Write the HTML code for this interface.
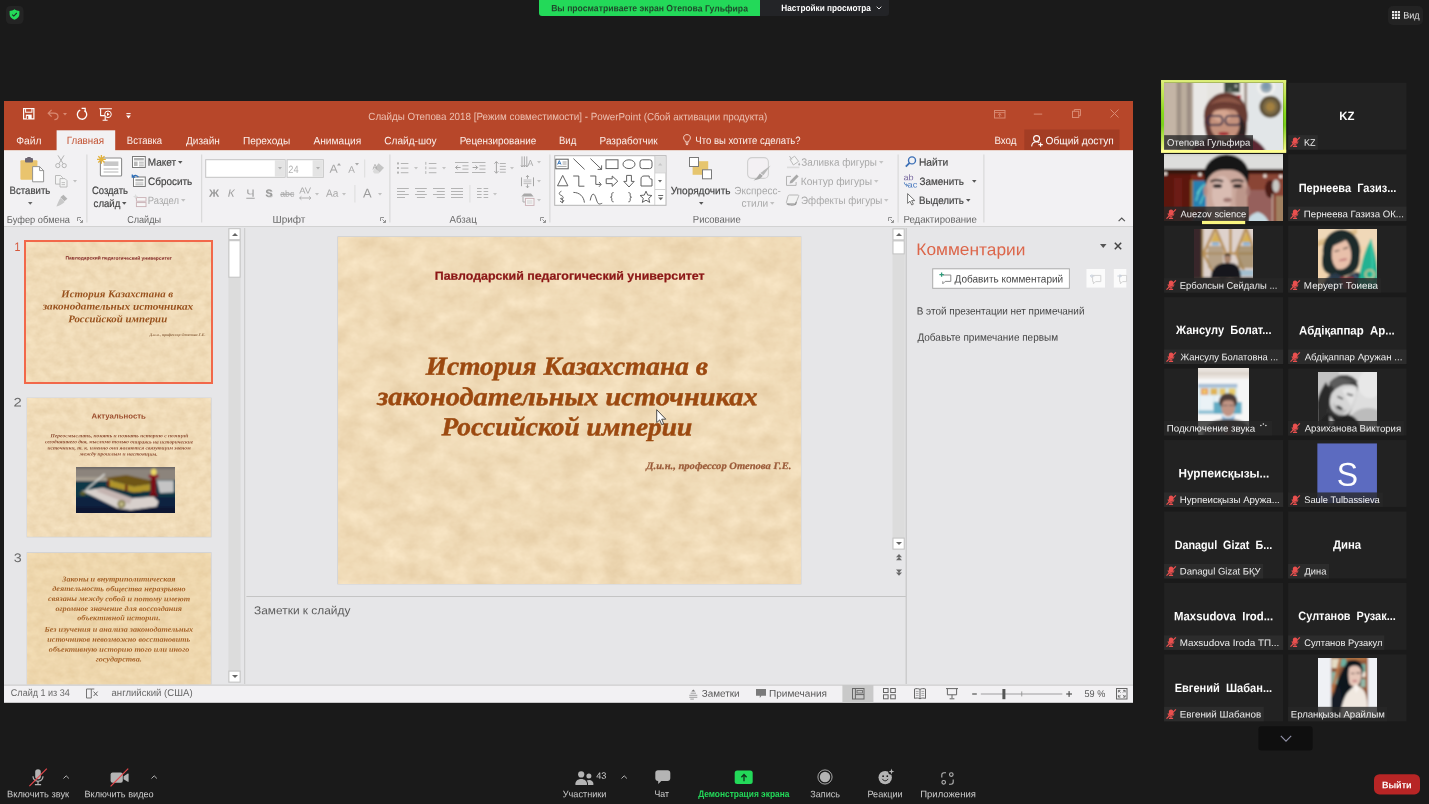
<!DOCTYPE html>
<html lang="ru"><head><meta charset="utf-8"><title>Zoom</title>
<style>
html,body{margin:0;padding:0;background:#1a1a1a;}
body{width:1429px;height:804px;overflow:hidden;font-family:"Liberation Sans",sans-serif;}
#root{position:relative;width:1429px;height:804px;overflow:hidden;background:#1a1a1a;}
#root div,#root svg,#root span.t{position:absolute;box-sizing:border-box;}
#root svg{overflow:visible;}
span.t{white-space:pre;transform-origin:0 50%;display:block;opacity:0.99;}
span.serif{font-family:"Liberation Serif",serif;}
span.dsans{font-family:"DejaVu Sans",sans-serif;}
span.dserif{font-family:"DejaVu Serif",serif;}

</style></head>
<body>
<svg width="0" height="0" style="position:absolute">
<defs>
<filter id="b1" x="-10%" y="-10%" width="120%" height="120%"><feGaussianBlur stdDeviation="1.2"/></filter>
<filter id="b2" x="-10%" y="-10%" width="120%" height="120%"><feGaussianBlur stdDeviation="1.4"/></filter>
<filter id="b05" x="-10%" y="-10%" width="120%" height="120%"><feGaussianBlur stdDeviation="0.8"/></filter>
<filter id="parch" x="0" y="0" width="100%" height="100%" color-interpolation-filters="sRGB">
<feTurbulence type="fractalNoise" baseFrequency="0.045 0.055" numOctaves="4" seed="11" result="n"/>
<feColorMatrix in="n" type="matrix" values="0.10 0 0 0 0.893  0.13 0 0 0 0.795  0.165 0 0 0 0.638  0 0 0 0 1"/>
</filter>
<filter id="parchs" x="0" y="0" width="100%" height="100%" color-interpolation-filters="sRGB">
<feTurbulence type="fractalNoise" baseFrequency="0.10 0.12" numOctaves="3" seed="5" result="n"/>
<feColorMatrix in="n" type="matrix" values="0.10 0 0 0 0.893  0.13 0 0 0 0.795  0.165 0 0 0 0.638  0 0 0 0 1"/>
</filter>
<linearGradient id="brown" x1="0" y1="0" x2="0" y2="1"><stop offset="0" stop-color="#8a3a0c"/><stop offset="0.5" stop-color="#a54e12"/><stop offset="1" stop-color="#8f4310"/></linearGradient>
</defs></svg>
<div id="root">
<svg style="left:4px;top:101px" width="1129" height="50"><rect x="0" y="0" width="1129" height="50" fill="#b7472a"/></svg>
<svg style="left:22.7px;top:108px;" width="11.5" height="11.5" viewBox="0 0 11.5 11.5"><path d="M0.6 0.6h10.3v10.3H0.6z" fill="none" stroke="#ffffff" stroke-width="1.2"/><rect x="2.6" y="0.6" width="6.3" height="3.6" fill="#b7472a" stroke="#ffffff" stroke-width="1"/><rect x="2.8" y="6.6" width="5.9" height="4.3" fill="#ffffff"/><rect x="3.8" y="8" width="1.4" height="2.9" fill="#b7472a"/></svg>
<svg style="left:46.5px;top:108.5px;" width="12" height="11" viewBox="0 0 12 11"><path d="M4.6 0.8L1.2 4.2l3.4 3.4M1.4 4.2h5.4c2.6 0 4.2 1.4 4.2 3.4s-1.6 3-3.6 3" stroke="#d98a72" stroke-width="1.2" fill="none"/></svg>
<svg style="left:63px;top:113.3px;" width="4" height="2.4" viewBox="0 0 5 3"><path d="M0 0h5L2.5 3z" fill="#d98a72"/></svg>
<svg style="left:75.5px;top:107.8px;" width="11.5" height="12" viewBox="0 0 11.5 12"><path d="M4.2 2.2A4.7 4.7 0 1 0 8.6 2.6" stroke="#ffffff" stroke-width="1.3" fill="none"/><path d="M5.6 0.4h3.6v3.6" stroke="#ffffff" stroke-width="1.2" fill="none"/></svg>
<svg style="left:99px;top:107.5px;" width="13.5" height="13" viewBox="0 0 13.5 13"><path d="M0.3 0.8h12.6M1.6 1v6.6h4.4M6.2 7.8v4.2M3.6 12.2h5" stroke="#ffffff" stroke-width="1.1" fill="none"/><circle cx="9" cy="6.3" r="3.3" fill="#b7472a" stroke="#ffffff" stroke-width="1"/><path d="M8 4.6l2.6 1.7l-2.6 1.7z" fill="#ffffff"/></svg>
<svg style="left:126.3px;top:112.6px;" width="5" height="6" viewBox="0 0 5 6"><path d="M0.4 0.6h4.2" stroke="#ffffff" stroke-width="1"/><path d="M0.2 2.6h4.6L2.5 5.4z" fill="#ffffff"/></svg>
<span class="t" style="transform:translate(0.30px,0.00px) rotate(0.03deg) scaleX(0.9450);left:368px;top:110px;font-size:10.4px;line-height:14px;color:#edc2b3;">Слайды Отепова 2018 [Режим совместимости] - PowerPoint (Сбой активации продукта)</span>
<svg style="left:994px;top:109.5px;" width="11.5" height="8.5" viewBox="0 0 11.5 8.5"><rect x="0.5" y="0.5" width="10.5" height="7.5" fill="none" stroke="#d98a72" stroke-width="1"/><path d="M0.5 2.6h10.5M5.7 7V3.6M4 5.2l1.7-1.7l1.7 1.7" stroke="#d98a72" stroke-width="0.9" fill="none"/></svg>
<svg style="left:1033px;top:113px" width="10" height="2"><rect x="0.8" y="0.6" width="8.4" height="1" fill="#d98a72"/></svg>
<svg style="left:1071.5px;top:109.3px;" width="9" height="9" viewBox="0 0 9 9"><rect x="0.5" y="2.3" width="6.2" height="6.2" fill="none" stroke="#d98a72" stroke-width="1"/><path d="M2.3 2.3V0.5h6.2v6.2H6.7" stroke="#d98a72" stroke-width="1" fill="none"/></svg>
<svg style="left:1109.8px;top:109px;" width="9" height="9" viewBox="0 0 9 9"><path d="M0.5 0.5l8 8M8.5 0.5l-8 8" stroke="#d98a72" stroke-width="1" fill="none"/></svg>
<svg style="left:56px;top:130px" width="60" height="21"><rect x="0.6" y="0.3" width="58.6" height="20.7" fill="#f2f1f3"/></svg>
<span class="t" style="transform:translate(0.21px,0.20px) rotate(0.03deg) scaleX(0.9714);left:16px;top:133px;font-size:10.6px;line-height:14px;color:#fdf3ef;">Файл</span>
<span class="t" style="transform:translate(0.82px,0.20px) rotate(0.03deg) scaleX(0.8959);left:126px;top:133px;font-size:10.6px;line-height:14px;color:#fdf3ef;">Вставка</span>
<span class="t" style="transform:translate(0.03px,0.20px) rotate(0.03deg) scaleX(0.9511);left:186px;top:133px;font-size:10.6px;line-height:14px;color:#fdf3ef;">Дизайн</span>
<span class="t" style="transform:translate(0.88px,0.20px) rotate(0.03deg) scaleX(0.9520);left:242px;top:133px;font-size:10.6px;line-height:14px;color:#fdf3ef;">Переходы</span>
<span class="t" style="transform:translate(0.38px,0.20px) rotate(0.03deg) scaleX(0.9635);left:313px;top:133px;font-size:10.6px;line-height:14px;color:#fdf3ef;">Анимация</span>
<span class="t" style="transform:translate(0.29px,0.20px) rotate(0.03deg) scaleX(0.9509);left:384px;top:133px;font-size:10.6px;line-height:14px;color:#fdf3ef;">Слайд-шоу</span>
<span class="t" style="transform:translate(0.69px,0.20px) rotate(0.03deg) scaleX(0.9369);left:459px;top:133px;font-size:10.6px;line-height:14px;color:#fdf3ef;">Рецензирование</span>
<span class="t" style="transform:translate(0.02px,0.20px) rotate(0.03deg) scaleX(0.8994);left:559px;top:133px;font-size:10.6px;line-height:14px;color:#fdf3ef;">Вид</span>
<span class="t" style="transform:translate(0.58px,0.20px) rotate(0.03deg) scaleX(0.9399);left:599px;top:133px;font-size:10.6px;line-height:14px;color:#fdf3ef;">Разработчик</span>
<span class="t" style="transform:translate(0.36px,0.20px) rotate(0.03deg) scaleX(0.8981);left:695px;top:133px;font-size:10.6px;line-height:14px;color:#fdf3ef;">Что вы хотите сделать?</span>
<span class="t" style="transform:translate(0.40px,0.20px) rotate(0.03deg) scaleX(0.9250);left:994px;top:133px;font-size:10.6px;line-height:14px;color:#fdf3ef;">Вход</span>
<span class="t" style="transform:translate(0.70px,0.20px) rotate(0.03deg) scaleX(0.9244);left:66px;top:133px;font-size:10.6px;line-height:14px;color:#c2502f;">Главная</span>
<svg style="left:682.5px;top:134px;" width="8" height="11.5" viewBox="0 0 8 11.5"><path d="M4 0.6c2 0 3.4 1.4 3.4 3.2c0 1.2-0.6 2-1.3 2.7c-0.4 0.4-0.5 0.9-0.5 1.5h-3.2c0-0.6-0.1-1.1-0.5-1.5c-0.7-0.7-1.3-1.5-1.3-2.7c0-1.8 1.4-3.2 3.4-3.2z" fill="none" stroke="#fbe3d8" stroke-width="0.9"/><path d="M2.6 9.2h2.8M2.9 10.6h2.2" stroke="#fbe3d8" stroke-width="0.9"/></svg>
<svg style="left:1024px;top:129px" width="96" height="22"><rect x="0.3" y="0.5" width="95.2" height="21.5" fill="#a33d24"/></svg>
<svg style="left:1030.5px;top:134.5px;" width="12.5" height="12" viewBox="0 0 12.5 12"><circle cx="5.6" cy="3.6" r="3" fill="none" stroke="#ffffff" stroke-width="1.1"/><path d="M0.6 11.4c0.4-3 2.4-4.6 5-4.6c1 0 1.9 0.2 2.6 0.7" stroke="#ffffff" stroke-width="1.1" fill="none"/><path d="M9.6 7.4v4.4M7.4 9.6h4.4" stroke="#ffffff" stroke-width="1.1"/></svg>
<span class="t" style="transform:translate(0.62px,0.20px) rotate(0.03deg) scaleX(0.9563);left:1045px;top:133px;font-size:10.6px;line-height:14px;color:#ffffff;">Общий доступ</span>
<svg style="left:4px;top:150px" width="1129" height="77"><rect x="0" y="0" width="1129" height="76.5" fill="#f2f1f3"/></svg>
<svg style="left:4px;top:150px" width="53" height="1"><rect x="0" y="0" width="52.6" height="1" fill="#e9d3ca"/></svg>
<svg style="left:115px;top:150px" width="1018" height="1"><rect x="0.2" y="0" width="1017.8" height="1" fill="#e9d3ca"/></svg>
<svg style="left:4px;top:226px" width="1129" height="1"><rect x="0" y="0" width="1129" height="1" fill="#d2d2d2"/></svg>
<svg style="left:19.8px;top:156.5px;" width="24.5" height="25.5" viewBox="0 0 24.5 25.5"><rect x="0.4" y="3.2" width="17" height="19.6" rx="1" fill="#e9c46e"/><rect x="5" y="1" width="8" height="4.4" rx="1" fill="#6d6672"/><rect x="7" y="0" width="4" height="2.6" rx="1.2" fill="#6d6672"/><path d="M12.6 9.6h7l4 4v11.2h-11z" fill="#fff" stroke="#8a8a8a" stroke-width="0.9"/><path d="M19.6 9.6v4h4" fill="none" stroke="#8a8a8a" stroke-width="0.9"/></svg>
<span class="t" style="transform:translate(0.61px,0.20px) rotate(0.03deg) scaleX(0.9059);left:9px;top:183px;font-size:10.6px;line-height:14px;color:#444444;-webkit-text-stroke:0.2px #444;">Вставить</span>
<svg style="left:27.95px;top:202.05px;" width="4.5" height="2.7" viewBox="0 0 5 3"><path d="M0 0h5L2.5 3z" fill="#666"/></svg>
<svg style="left:55.4px;top:155px;" width="12" height="13.5" viewBox="0 0 12 13.5"><path d="M3 0.4l5.2 8.4M9 0.4L3.8 8.8" stroke="#b4b4b4" stroke-width="1" fill="none"/><circle cx="2.8" cy="10.6" r="2.1" fill="none" stroke="#b4b4b4" stroke-width="1"/><circle cx="9.2" cy="10.6" r="2.1" fill="none" stroke="#b4b4b4" stroke-width="1"/></svg>
<svg style="left:55.4px;top:175px;" width="12.5" height="12.5" viewBox="0 0 12.5 12.5"><path d="M0.5 0.5h5l2 2v6.6h-7z" fill="#f4f4f4" stroke="#b4b4b4" stroke-width="0.9"/><path d="M5 3.6h5l2 2v6.4h-7z" fill="#f4f4f4" stroke="#b4b4b4" stroke-width="0.9"/><path d="M6.6 7.6h3.4M6.6 9.6h3.4" stroke="#b4b4b4" stroke-width="0.8"/></svg>
<svg style="left:73px;top:179.8px;" width="4" height="2.4" viewBox="0 0 5 3"><path d="M0 0h5L2.5 3z" fill="#c0c0c0"/></svg>
<svg style="left:55.6px;top:193.5px;" width="12.5" height="13" viewBox="0 0 12.5 13"><path d="M7.4 0.8l4 4l-3 2.4l-4-4z" fill="#b4b4b4"/><path d="M4.6 4l4 4l-1.4 1.2c-2 1.6-4.4 2.6-6.8 3.2c1-2.2 1.8-4.6 3-6.800z" fill="#c8c8c8"/></svg>
<span class="t" style="transform:translate(0.84px,0.80px) rotate(0.03deg) scaleX(0.9294);left:6px;top:212px;font-size:10px;line-height:13px;color:#666666;">Буфер обмена</span>
<svg style="left:77px;top:216.5px;" width="6" height="6" viewBox="0 0 6 6"><path d="M0.5 4V0.5H4" stroke="#888" stroke-width="0.9" fill="none"/><path d="M2.4 2.4L5.3 5.3M5.5 3v2.5H3" stroke="#888" stroke-width="0.9" fill="none"/></svg>
<svg style="left:86px;top:154px" width="2" height="69"><rect x="0.4" y="0.5" width="1" height="68" fill="#d4d4d4"/></svg>
<svg style="left:96.8px;top:155.3px;" width="25.5" height="22" viewBox="0 0 25.5 22"><rect x="3.4" y="3" width="21.2" height="18" rx="1" fill="#fff" stroke="#8c8c8c" stroke-width="1.1"/><rect x="6.6" y="6.4" width="14.8" height="4.6" fill="#c8c8c8"/><path d="M6.600 14h14.8M6.600 17h14.8" stroke="#b4b4b4" stroke-width="1"/><g stroke="#e3b23c" stroke-width="1.3"><path d="M4.400 0v8.800M0 4.400h8.800M1.300 1.300l6.200 6.200M7.500 1.300l-6.200 6.200"/></g></svg>
<span class="t" style="transform:translate(0.92px,0.20px) rotate(0.03deg) scaleX(0.8958);left:91px;top:183px;font-size:10.6px;line-height:14px;color:#444444;-webkit-text-stroke:0.2px #444;">Создать</span>
<span class="t" style="transform:translate(0.60px,0.80px) rotate(0.03deg) scaleX(0.9079);left:93px;top:195px;font-size:10.6px;line-height:14px;color:#444444;-webkit-text-stroke:0.2px #444;">слайд</span>
<svg style="left:122.05px;top:202.25px;" width="4.5" height="2.7" viewBox="0 0 5 3"><path d="M0 0h5L2.5 3z" fill="#555"/></svg>
<svg style="left:132.3px;top:155.8px;" width="13.8" height="12" viewBox="0 0 13.8 12"><rect x="0.5" y="0.5" width="12.8" height="11" fill="#fff" stroke="#7a7a7a" stroke-width="1"/><rect x="2" y="2" width="9.8" height="2.4" fill="#b0b0b0"/><rect x="2" y="5.600" width="3.6" height="4.400" fill="#b8b8b8"/><path d="M7 6.200h4.800M7 8h4.800M7 9.800h4.800" stroke="#9a9a9a" stroke-width="0.8"/></svg>
<span class="t" style="transform:translate(0.78px,0.70px) rotate(0.03deg) scaleX(0.9470);left:147px;top:154px;font-size:10.6px;line-height:14px;color:#444444;-webkit-text-stroke:0.2px #444;">Макет</span>
<svg style="left:178.35px;top:160.65px;" width="4.5" height="2.7" viewBox="0 0 5 3"><path d="M0 0h5L2.5 3z" fill="#555"/></svg>
<svg style="left:132.3px;top:174.2px;" width="13.8" height="13" viewBox="0 0 13.8 13"><rect x="1.500" y="3" width="11.8" height="9.500" fill="#fff" stroke="#7a7a7a" stroke-width="1"/><rect x="3.400" y="5" width="8" height="2.200" fill="#b0b0b0"/><path d="M3.400 9h8M3.400 10.800h8" stroke="#9a9a9a" stroke-width="0.8"/><path d="M6.400 3.200c-1.400-2-4-2.600-5.800-0.400M0.300 0.400v2.800h2.800" stroke="#2f6fb8" stroke-width="1.3" fill="none"/></svg>
<span class="t" style="transform:translate(0.10px,0.90px) rotate(0.03deg) scaleX(0.9366);left:148px;top:173px;font-size:10.6px;line-height:14px;color:#444444;-webkit-text-stroke:0.2px #444;">Сбросить</span>
<svg style="left:133px;top:193.5px;" width="13.5" height="13" viewBox="0 0 13.5 13"><rect x="3.400" y="3.600" width="9.600" height="3.600" fill="#f6f6f6" stroke="#c9b0b4" stroke-width="0.9"/><rect x="3.400" y="8.600" width="9.600" height="4" fill="#f6f6f6" stroke="#c9b0b4" stroke-width="0.9"/><path d="M2.600 0l0.800 1.800l1.800 0.800l-1.800 0.800l-0.800 1.800l-0.800-1.800l-1.800-0.800l1.800-0.800z" fill="#dcdcdc"/></svg>
<span class="t" style="transform:translate(0.82px,0.00px) rotate(0.03deg) scaleX(0.8918);left:147px;top:193px;font-size:10.6px;line-height:14px;color:#a8a8a8;">Раздел</span>
<svg style="left:180.75px;top:199.05px;" width="4.5" height="2.7" viewBox="0 0 5 3"><path d="M0 0h5L2.5 3z" fill="#c0c0c0"/></svg>
<span class="t" style="transform:translate(0.14px,0.80px) rotate(0.03deg) scaleX(0.9102);left:127px;top:212px;font-size:10px;line-height:13px;color:#666666;">Слайды</span>
<svg style="left:201px;top:154px" width="2" height="69"><rect x="0.2" y="0.5" width="1" height="68" fill="#d4d4d4"/></svg>
<svg style="left:205px;top:159px" width="81" height="19"><rect x="0.7" y="0.7" width="79.4" height="17.6" fill="#ffffff" stroke="#c4c4c4" stroke-width="1"/></svg>
<svg style="left:274px;top:160px" width="11" height="17"><rect x="0.8" y="0.2" width="9.8" height="16.6" fill="#e4e4e4"/></svg>
<svg style="left:277.8px;top:167.3px;" width="4" height="2.4" viewBox="0 0 5 3"><path d="M0 0h5L2.5 3z" fill="#b0b0b0"/></svg>
<svg style="left:286px;top:159px" width="38" height="19"><rect x="1.1" y="0.7" width="36.2" height="17.6" fill="#ffffff" stroke="#c4c4c4" stroke-width="1"/></svg>
<svg style="left:312px;top:160px" width="11" height="17"><rect x="0.6" y="0.2" width="10.2" height="16.6" fill="#e4e4e4"/></svg>
<svg style="left:315.8px;top:167.3px;" width="4" height="2.4" viewBox="0 0 5 3"><path d="M0 0h5L2.5 3z" fill="#b0b0b0"/></svg>
<span class="t" style="transform:translate(0.34px,0.60px) rotate(0.03deg) scaleX(0.8761);left:288px;top:161px;font-size:10.6px;line-height:14px;color:#b4b4b4;">24</span>
<span class="t" style="transform:translate(0.38px,0.80px) rotate(0.03deg) scaleX(1.0650);left:329px;top:160px;font-size:11.6px;line-height:15px;color:#a8a8a8;">A</span>
<svg style="left:336.6px;top:162.6px;" width="4" height="2.6" viewBox="0 0 4 2.6"><path d="M0 2.600L2 0l2 2.600z" fill="#a8a8a8"/></svg>
<span class="t" style="transform:translate(0.19px,0.80px) rotate(0.03deg) scaleX(1.0349);left:348px;top:163px;font-size:9.6px;line-height:12px;color:#a8a8a8;">A</span>
<svg style="left:354.6px;top:162.8px;" width="4" height="2.6" viewBox="0 0 4 2.6"><path d="M0 0h4L2 2.600z" fill="#a8a8a8"/></svg>
<svg style="left:364px;top:159px" width="2" height="19"><rect x="0.2" y="0.5" width="1" height="18" fill="#dcdcdc"/></svg>
<svg style="left:371px;top:162px;" width="14" height="12" viewBox="0 0 14 12"><path d="M7.600 1.200l5.400 4.600l-4.400 4.800l-5-4.400z" fill="#c4c4c4"/><path d="M3.600 6.200l5 4.400l-1 1h-4l-1.800-1.800z" fill="#dadada"/></svg>
<span class="t" style="transform:translate(0.39px,0.40px) rotate(0.03deg) scaleX(0.9890);left:372px;top:162px;font-size:7.6px;line-height:10px;color:#a8a8a8;">A</span>
<span class="t" style="transform:translate(0.03px,0.80px) rotate(0.03deg) scaleX(1.0554);left:209px;top:185px;font-size:10.6px;line-height:14px;color:#9a9a9a;font-weight:bold;">Ж</span>
<span class="t" style="transform:translate(0.65px,0.80px) rotate(0.03deg) scaleX(1.0902);left:227px;top:185px;font-size:10.6px;line-height:14px;color:#a0a0a0;font-style:italic;">К</span>
<span class="t" style="transform:translate(0.31px,0.80px) rotate(0.03deg) scaleX(1.1914);left:246px;top:185px;font-size:10.6px;line-height:14px;color:#a0a0a0;text-decoration:underline;">Ч</span>
<span class="t" style="transform:translate(0.29px,0.80px) rotate(0.03deg) scaleX(1.0373);left:265px;top:185px;font-size:10.6px;line-height:14px;color:#9a9a9a;font-weight:bold;text-shadow:0.8px 0.8px 0 #cfcfcf;">S</span>
<span class="t" style="transform:translate(0.24px,0.80px) rotate(0.03deg) scaleX(0.9638);left:280px;top:187px;font-size:9px;line-height:12px;color:#a4a4a4;text-decoration:line-through;">abc</span>
<span class="t" style="transform:translate(0.19px,0.60px) rotate(0.03deg) scaleX(1.0945);left:299px;top:185px;font-size:8.6px;line-height:11px;color:#a8a8a8;">AV</span>
<svg style="left:299px;top:195.6px;" width="12.5" height="4" viewBox="0 0 12.5 4"><path d="M0.600 2h11.300M2.400 0.300L0.600 2l1.800 1.700M10.100 0.300L11.900 2l-1.800 1.700" stroke="#a8a8a8" stroke-width="0.9" fill="none"/></svg>
<svg style="left:315px;top:192.6px;" width="4" height="2.4" viewBox="0 0 5 3"><path d="M0 0h5L2.5 3z" fill="#c0c0c0"/></svg>
<span class="t" style="transform:translate(0.98px,0.80px) rotate(0.03deg) scaleX(0.9570);left:325px;top:185px;font-size:10.6px;line-height:14px;color:#a8a8a8;">Aa</span>
<svg style="left:342.4px;top:192.6px;" width="4" height="2.4" viewBox="0 0 5 3"><path d="M0 0h5L2.5 3z" fill="#c0c0c0"/></svg>
<svg style="left:354px;top:185px" width="2" height="18"><rect x="0.4" y="0" width="1" height="17.5" fill="#dcdcdc"/></svg>
<span class="t" style="transform:translate(0.98px,0.60px) rotate(0.03deg) scaleX(1.0277);left:362px;top:185px;font-size:12.6px;line-height:16px;color:#9c9c9c;">A</span>
<svg style="left:378.4px;top:192.6px;" width="4" height="2.4" viewBox="0 0 5 3"><path d="M0 0h5L2.5 3z" fill="#c0c0c0"/></svg>
<span class="t" style="transform:translate(0.48px,0.80px) rotate(0.03deg) scaleX(0.9995);left:272px;top:212px;font-size:10px;line-height:13px;color:#666666;">Шрифт</span>
<svg style="left:380px;top:216.5px;" width="6" height="6" viewBox="0 0 6 6"><path d="M0.5 4V0.5H4" stroke="#888" stroke-width="0.9" fill="none"/><path d="M2.4 2.4L5.3 5.3M5.5 3v2.5H3" stroke="#888" stroke-width="0.9" fill="none"/></svg>
<svg style="left:389px;top:154px" width="2" height="69"><rect x="0.4" y="0.5" width="1" height="68" fill="#d4d4d4"/></svg>
<svg style="left:396.6px;top:161.8px;" width="12" height="12" viewBox="0 0 12 12"><rect x="0" y="0.4" width="2" height="2" fill="#b4b4b4"/><rect x="3.800" y="1" width="7.600" height="1" fill="#b4b4b4"/><rect x="0" y="5" width="2" height="2" fill="#b4b4b4"/><rect x="3.800" y="5.6" width="7.600" height="1" fill="#b4b4b4"/><rect x="0" y="9.6" width="2" height="2" fill="#b4b4b4"/><rect x="3.800" y="10.2" width="7.600" height="1" fill="#b4b4b4"/></svg>
<svg style="left:414.2px;top:167.4px;" width="4" height="2.4" viewBox="0 0 5 3"><path d="M0 0h5L2.5 3z" fill="#c4c4c4"/></svg>
<svg style="left:424.8px;top:161.8px;" width="12" height="12" viewBox="0 0 12 12"><rect x="0.300" y="-0.1" width="1" height="2.800" fill="#b4b4b4"/><rect x="3.800" y="1" width="7.600" height="1" fill="#b4b4b4"/><rect x="0.300" y="4.5" width="1" height="2.800" fill="#b4b4b4"/><rect x="3.800" y="5.6" width="7.600" height="1" fill="#b4b4b4"/><rect x="0.300" y="9.1" width="1" height="2.800" fill="#b4b4b4"/><rect x="3.800" y="10.2" width="7.600" height="1" fill="#b4b4b4"/></svg>
<svg style="left:442.2px;top:167.4px;" width="4" height="2.4" viewBox="0 0 5 3"><path d="M0 0h5L2.5 3z" fill="#c4c4c4"/></svg>
<svg style="left:454.5px;top:162.3px;" width="14" height="12" viewBox="0 0 14 12"><path d="M0 0.500h13.500M7.400 3.800h6.100M7.400 7.100h6.100M0 10.500h13.500" stroke="#b4b4b4" stroke-width="1"/><path d="M5.600 5.500H0.600M2.600 3.500L0.600 5.500l2 2" stroke="#a4a4a4" stroke-width="1" fill="none"/></svg>
<svg style="left:472px;top:162.3px;" width="14" height="12" viewBox="0 0 14 12"><path d="M0 0.500h13.500M7.400 3.800h6.100M7.400 7.100h6.100M0 10.500h13.500" stroke="#b4b4b4" stroke-width="1"/><path d="M0.600 5.500h5M3.600 3.500l2 2l-2 2" stroke="#a4a4a4" stroke-width="1" fill="none"/></svg>
<svg style="left:494.2px;top:161.4px;" width="12" height="13" viewBox="0 0 12 13"><path d="M2.400 0.600v11.600M0.400 2.600l2-2l2 2M0.400 10.200l2 2l2-2" stroke="#a4a4a4" stroke-width="1" fill="none"/><path d="M5.800 2.500h6M5.800 5.400h6M5.800 8.300h6M5.800 11.200h6" stroke="#b4b4b4" stroke-width="1"/></svg>
<svg style="left:510.2px;top:167.4px;" width="4" height="2.4" viewBox="0 0 5 3"><path d="M0 0h5L2.5 3z" fill="#c4c4c4"/></svg>
<svg style="left:520.8px;top:156px;" width="13" height="12.5" viewBox="0 0 13 12.5"><path d="M1 0.400v10.600M3.400 0.400v10.600M5.800 0.400v10.600M0 9.400l1 1.600l1-1.600M2.400 9.400l1 1.600l1-1.600M4.800 9.400l1 1.600l1-1.600" stroke="#a4a4a4" stroke-width="0.9" fill="none"/></svg>
<span class="t" style="transform:translate(0.59px,0.00px) rotate(0.03deg) scaleX(1.0160);left:527px;top:158px;font-size:8.6px;line-height:11px;color:#a8a8a8;">A</span>
<svg style="left:537px;top:160.8px;" width="4" height="2.4" viewBox="0 0 5 3"><path d="M0 0h5L2.5 3z" fill="#c4c4c4"/></svg>
<svg style="left:520.8px;top:174.6px;" width="13" height="13" viewBox="0 0 13 13"><path d="M0.500 2.400v8.800M12.500 2.400v8.800" stroke="#a4a4a4" stroke-width="1"/><path d="M6.500 0.400v3.400M5 2l1.500-1.600L8 2M6.500 12.800V9.400M5 11.200l1.500 1.600l1.500-1.600" stroke="#a4a4a4" stroke-width="0.9" fill="none"/><path d="M2.600 5h7.800M2.600 6.800h7.800M2.600 8.600h7.800" stroke="#b4b4b4" stroke-width="0.8"/></svg>
<svg style="left:537px;top:179.8px;" width="4" height="2.4" viewBox="0 0 5 3"><path d="M0 0h5L2.5 3z" fill="#c4c4c4"/></svg>
<svg style="left:520.8px;top:193.4px;" width="13.5" height="13" viewBox="0 0 13.5 13"><path d="M0.400 3.400L3 0.500h7l2.600 2.900z" fill="#a8a8a8"/><rect x="4.400" y="5.400" width="8.600" height="7" fill="#f6f6f6" stroke="#c9b0b4" stroke-width="0.9"/><path d="M6 8h5.400M6 10h5.400" stroke="#c8c8c8" stroke-width="0.8"/><path d="M2 4v5h2" stroke="#a8a8a8" stroke-width="0.9" fill="none"/></svg>
<svg style="left:537px;top:198.8px;" width="4" height="2.4" viewBox="0 0 5 3"><path d="M0 0h5L2.5 3z" fill="#c4c4c4"/></svg>
<svg style="left:396.7px;top:187.8px;" width="12" height="12" viewBox="0 0 12 12"><rect x="0" y="0" width="11.8" height="1" fill="#b4b4b4"/><rect x="0" y="3" width="8" height="1" fill="#b4b4b4"/><rect x="0" y="6" width="11.8" height="1" fill="#b4b4b4"/><rect x="0" y="9" width="8" height="1" fill="#b4b4b4"/></svg>
<svg style="left:415px;top:187.8px;" width="11.8" height="12" viewBox="0 0 11.8 12"><rect x="0" y="0" width="11.8" height="1" fill="#b4b4b4"/><rect x="1.9" y="3" width="8" height="1" fill="#b4b4b4"/><rect x="0" y="6" width="11.8" height="1" fill="#b4b4b4"/><rect x="1.9" y="9" width="8" height="1" fill="#b4b4b4"/></svg>
<svg style="left:433px;top:187.8px;" width="11.8" height="12" viewBox="0 0 11.8 12"><rect x="0" y="0" width="11.8" height="1" fill="#b4b4b4"/><rect x="3.8" y="3" width="8" height="1" fill="#b4b4b4"/><rect x="0" y="6" width="11.8" height="1" fill="#b4b4b4"/><rect x="3.8" y="9" width="8" height="1" fill="#b4b4b4"/></svg>
<svg style="left:451.2px;top:187.8px;" width="12" height="12" viewBox="0 0 12 12"><rect x="0" y="0" width="12" height="1" fill="#b4b4b4"/><rect x="0" y="3" width="12" height="1" fill="#b4b4b4"/><rect x="0" y="6" width="12" height="1" fill="#b4b4b4"/><rect x="0" y="9" width="12" height="1" fill="#b4b4b4"/></svg>
<svg style="left:469px;top:185px" width="2" height="18"><rect x="0.4" y="0" width="1" height="17.5" fill="#dcdcdc"/></svg>
<svg style="left:476.6px;top:188px;" width="11.5" height="11" viewBox="0 0 11.5 11"><path d="M0 0.500h4.600M0 3.500h4.600M0 6.500h4.600M0 9.500h4.600M6.600 0.500h4.600M6.600 3.500h4.600M6.600 6.500h4.600M6.600 9.500h4.600" stroke="#b4b4b4" stroke-width="1"/></svg>
<svg style="left:492.6px;top:192.6px;" width="4" height="2.4" viewBox="0 0 5 3"><path d="M0 0h5L2.5 3z" fill="#c4c4c4"/></svg>
<span class="t" style="transform:translate(0.59px,0.80px) rotate(0.03deg) scaleX(0.9669);left:449px;top:212px;font-size:10px;line-height:13px;color:#666666;">Абзац</span>
<svg style="left:540px;top:216.5px;" width="6" height="6" viewBox="0 0 6 6"><path d="M0.5 4V0.5H4" stroke="#888" stroke-width="0.9" fill="none"/><path d="M2.4 2.4L5.3 5.3M5.5 3v2.5H3" stroke="#888" stroke-width="0.9" fill="none"/></svg>
<svg style="left:549px;top:154px" width="2" height="69"><rect x="0.4" y="0.5" width="1" height="68" fill="#d4d4d4"/></svg>
<svg style="left:554px;top:155px" width="113" height="51"><rect x="0.7" y="0.7" width="111.3" height="49.6" fill="#ffffff" stroke="#b4b4b4" stroke-width="1"/></svg>
<svg style="left:655px;top:156px" width="11" height="17"><rect x="0" y="0.2" width="10.5" height="16.3" fill="#e2e2e2"/></svg>
<svg style="left:655px;top:172px" width="11" height="2"><rect x="0" y="0.5" width="10.5" height="0.8" fill="#c8c8c8"/></svg>
<svg style="left:655px;top:189px" width="11" height="1"><rect x="0" y="0" width="10.5" height="0.8" fill="#c8c8c8"/></svg>
<svg style="left:654px;top:156px" width="2" height="49"><rect x="0.4" y="0" width="0.8" height="49" fill="#c8c8c8"/></svg>
<svg style="left:658.2px;top:162.6px;" width="4.4" height="2.6" viewBox="0 0 4.4 2.6"><path d="M0 2.600L2.200 0l2.200 2.600z" fill="#c6c6c6"/></svg>
<svg style="left:658.4px;top:179.8px;" width="4" height="2.4" viewBox="0 0 5 3"><path d="M0 0h5L2.5 3z" fill="#666"/></svg>
<svg style="left:657.8px;top:194.8px;" width="5.4" height="5.4" viewBox="0 0 5.4 5.4"><path d="M0.200 0.500h5" stroke="#666" stroke-width="1"/><path d="M0.200 2.400h5L2.700 5.200z" fill="#666"/></svg>
<svg style="left:555.3px;top:156.9px;" width="14" height="14" viewBox="0 0 14 14"><g fill="none" stroke="#5a5a5a" stroke-width="0.950"><rect x="0.800" y="2.200" width="12.400" height="9.600" stroke="#555"/><path d="M7.600 5h4M7.600 7h4M2.400 9.400h9.200" stroke="#8a8a8a" stroke-width="0.800"/><path d="M2.600 7.600l1.700-4l1.700 4M3.200 6.400h2.200" stroke="#2f6fb8" stroke-width="0.900"/></g></svg>
<svg style="left:572px;top:156.9px;" width="14" height="14" viewBox="0 0 14 14"><g fill="none" stroke="#5a5a5a" stroke-width="0.950"><path d="M1.400 1.600l11.200 10.800"/></g></svg>
<svg style="left:588.5px;top:156.9px;" width="14" height="14" viewBox="0 0 14 14"><g fill="none" stroke="#5a5a5a" stroke-width="0.950"><path d="M1.400 1.600l11.200 10.800M12.600 8.400v4h-4"/></g></svg>
<svg style="left:605.4px;top:156.9px;" width="14" height="14" viewBox="0 0 14 14"><g fill="none" stroke="#5a5a5a" stroke-width="0.950"><rect x="1" y="2.800" width="12" height="8.800"/></g></svg>
<svg style="left:622px;top:156.9px;" width="14" height="14" viewBox="0 0 14 14"><g fill="none" stroke="#5a5a5a" stroke-width="0.950"><ellipse cx="7" cy="7.200" rx="6" ry="4.400"/></g></svg>
<svg style="left:638.5px;top:156.9px;" width="14" height="14" viewBox="0 0 14 14"><g fill="none" stroke="#5a5a5a" stroke-width="0.950"><rect x="1" y="2.800" width="12" height="8.800" rx="2.400"/></g></svg>
<svg style="left:555.3px;top:173.7px;" width="14" height="14" viewBox="0 0 14 14"><g fill="none" stroke="#5a5a5a" stroke-width="0.950"><path d="M7.700 1.400l5.200 10.400H2.500z"/></g></svg>
<svg style="left:572px;top:173.7px;" width="14" height="14" viewBox="0 0 14 14"><g fill="none" stroke="#5a5a5a" stroke-width="0.950"><path d="M1.200 2h5.600v10.200h5.600"/></g></svg>
<svg style="left:588.5px;top:173.7px;" width="14" height="14" viewBox="0 0 14 14"><g fill="none" stroke="#5a5a5a" stroke-width="0.950"><path d="M1.200 2h5.600v8.400h5M10 8l2.200 2.400L10 12.800"/></g></svg>
<svg style="left:605.4px;top:173.7px;" width="14" height="14" viewBox="0 0 14 14"><g fill="none" stroke="#5a5a5a" stroke-width="0.950"><path d="M1.200 4.800h6V2l5.600 5.200l-5.600 5.200V9.600h-6z"/></g></svg>
<svg style="left:622px;top:173.7px;" width="14" height="14" viewBox="0 0 14 14"><g fill="none" stroke="#5a5a5a" stroke-width="0.950"><path d="M4.600 1.400h4.800v6h2.800L7 13L1.800 7.400h2.800z"/></g></svg>
<svg style="left:638.5px;top:173.7px;" width="14" height="14" viewBox="0 0 14 14"><g fill="none" stroke="#5a5a5a" stroke-width="0.950"><path d="M2 12V5c0-1.800 1.200-3 3-3h5.200c-0.300 1.900 0.900 3.200 2.800 3.200V12z"/></g></svg>
<svg style="left:555.3px;top:190px;" width="14" height="14" viewBox="0 0 14 14"><g fill="none" stroke="#5a5a5a" stroke-width="0.950"><path d="M6.400 1.200c-2.400 1-2.800 3-1 3.800c2.200 1 3.400 2 2.400 3.600c-0.600 1-2 1-2.200 0.200c-0.200-0.800 1-1 1.600 0c0.600 1.200 0.600 2.600 0.200 4M9 10l-1.600 2.800L5 11"/></g></svg>
<svg style="left:572px;top:190px;" width="14" height="14" viewBox="0 0 14 14"><g fill="none" stroke="#5a5a5a" stroke-width="0.950"><path d="M1.400 2.400c6 0 10.400 4 11 10.200"/></g></svg>
<svg style="left:588.5px;top:190px;" width="14" height="14" viewBox="0 0 14 14"><g fill="none" stroke="#5a5a5a" stroke-width="0.950"><path d="M1.200 10.500c1.500-8 4-8.500 6-1.500s3.500 4.800 6 4.300"/></g></svg>
<svg style="left:605.4px;top:190px;" width="14" height="14" viewBox="0 0 14 14"><g fill="none" stroke="#5a5a5a" stroke-width="0.950"><path d="M8.600 2.600c-1.400 0-1.800 0.500-1.800 1.500v1.700c0 0.900-0.400 1.400-1.300 1.400c0.900 0 1.300 0.500 1.300 1.400v1.700c0 1 0.400 1.500 1.800 1.500"/></g></svg>
<svg style="left:622px;top:190px;" width="14" height="14" viewBox="0 0 14 14"><g fill="none" stroke="#5a5a5a" stroke-width="0.950"><path d="M6.400 2.600c1.400 0 1.800 0.500 1.800 1.500v1.700c0 0.900 0.400 1.400 1.300 1.400c-0.900 0-1.300 0.500-1.300 1.400v1.700c0 1-0.400 1.500-1.800 1.500"/></g></svg>
<svg style="left:638.5px;top:190px;" width="14" height="14" viewBox="0 0 14 14"><g fill="none" stroke="#5a5a5a" stroke-width="0.950"><path d="M7 1.200l1.700 3.900l4.200 0.400l-3.200 2.800l1 4.100L7 10.200l-3.700 2.200l1-4.100L1.100 5.500l4.200-0.400z"/></g></svg>
<svg style="left:688.8px;top:156.6px;" width="23.5" height="22.5" viewBox="0 0 23.5 22.5"><rect x="3.600" y="4.200" width="15.600" height="13.600" fill="#e6c56e"/><rect x="0.500" y="0.500" width="9" height="9" fill="#fff" stroke="#7a7a7a" stroke-width="1"/><rect x="13.500" y="12.800" width="9" height="9" fill="#fff" stroke="#7a7a7a" stroke-width="1"/></svg>
<span class="t" style="transform:translate(0.63px,0.20px) rotate(0.03deg) scaleX(0.9514);left:670px;top:183px;font-size:10.6px;line-height:14px;color:#444444;-webkit-text-stroke:0.2px #444;">Упорядочить</span>
<svg style="left:698.65px;top:202.05px;" width="4.5" height="2.7" viewBox="0 0 5 3"><path d="M0 0h5L2.5 3z" fill="#555"/></svg>
<svg style="left:746.8px;top:157px;" width="24.5" height="24.5" viewBox="0 0 24.5 24.5"><rect x="0.600" y="0.600" width="20.800" height="20.800" rx="4.500" fill="#f3f0f3" stroke="#cfcfcf" stroke-width="1.100"/><path d="M23.600 8.600l-7.200 9.600l-3-2.200z" fill="#b8b8b8"/><path d="M12.800 16.600l3 2.200c-1.400 2.600-5 4.200-9.200 4.600c2.200-1.400 4.400-4 6.200-6.800z" fill="#a8a8a8"/></svg>
<span class="t" style="transform:translate(0.19px,0.20px) rotate(0.03deg) scaleX(0.9461);left:734px;top:183px;font-size:10.6px;line-height:14px;color:#a8a8a8;">Экспресс-</span>
<span class="t" style="transform:translate(0.38px,0.80px) rotate(0.03deg) scaleX(0.9521);left:741px;top:195px;font-size:10.6px;line-height:14px;color:#a8a8a8;">стили</span>
<svg style="left:769.95px;top:202.25px;" width="4.5" height="2.7" viewBox="0 0 5 3"><path d="M0 0h5L2.5 3z" fill="#c0c0c0"/></svg>
<svg style="left:786.6px;top:155.2px;" width="13" height="13" viewBox="0 0 13 13"><path d="M3 4.400l4.600-3.200l4 5.200l-5.200 3.600z" fill="#f4f4f4" stroke="#b4b4b4" stroke-width="0.900"/><path d="M2.400 1l2.400 3.600" stroke="#b4b4b4" stroke-width="0.900"/><path d="M12.200 7.400c0.600 1 1 1.600 1 2.200a1 1 0 0 1-2 0c0-0.600 0.400-1.200 1-2.200z" fill="#b4b4b4"/><rect x="0" y="11.600" width="12.400" height="1.600" fill="#dcdcdc"/></svg>
<span class="t" style="transform:translate(0.28px,0.70px) rotate(0.03deg) scaleX(0.9345);left:801px;top:154px;font-size:10.6px;line-height:14px;color:#a8a8a8;">Заливка фигуры</span>
<svg style="left:878.95px;top:160.65px;" width="4.5" height="2.7" viewBox="0 0 5 3"><path d="M0 0h5L2.5 3z" fill="#c4c4c4"/></svg>
<svg style="left:786.4px;top:174px;" width="13" height="13" viewBox="0 0 13 13"><path d="M5 2.400H0.500v9h9.600V8" stroke="#b4b4b4" stroke-width="1" fill="none"/><path d="M10.600 0.600l2 2l-6.400 6.400l-2.600 0.600l0.600-2.600z" fill="#a8a8a8"/></svg>
<span class="t" style="transform:translate(0.76px,0.90px) rotate(0.03deg) scaleX(0.9615);left:800px;top:173px;font-size:10.6px;line-height:14px;color:#a8a8a8;">Контур фигуры</span>
<svg style="left:874.15px;top:179.85px;" width="4.5" height="2.7" viewBox="0 0 5 3"><path d="M0 0h5L2.5 3z" fill="#c4c4c4"/></svg>
<svg style="left:786.4px;top:193.8px;" width="13" height="12" viewBox="0 0 13 12"><path d="M3.400 1h8.600c0.600 0 1 0.600 0.600 1.400l-2.400 6c-0.300 0.800-1 1.200-1.800 1.200H1.400c-0.800 0-1.200-0.600-0.900-1.400L2 2.400c0.200-0.800 0.600-1.400 1.400-1.400z" fill="#f2f2f2" stroke="#b0b0b0" stroke-width="0.900"/><path d="M1 9.800c1.600 1.400 6 1.400 8.400 0.600l1-2.400" stroke="#9a9a9a" stroke-width="1.400" fill="none"/></svg>
<span class="t" style="transform:translate(0.10px,0.00px) rotate(0.03deg) scaleX(0.9205);left:801px;top:193px;font-size:10.6px;line-height:14px;color:#a8a8a8;">Эффекты фигуры</span>
<svg style="left:884.45px;top:199.05px;" width="4.5" height="2.7" viewBox="0 0 5 3"><path d="M0 0h5L2.5 3z" fill="#c4c4c4"/></svg>
<span class="t" style="transform:translate(0.82px,0.80px) rotate(0.03deg) scaleX(0.9509);left:692px;top:212px;font-size:10px;line-height:13px;color:#666666;">Рисование</span>
<svg style="left:888px;top:216.5px;" width="6" height="6" viewBox="0 0 6 6"><path d="M0.5 4V0.5H4" stroke="#888" stroke-width="0.9" fill="none"/><path d="M2.4 2.4L5.3 5.3M5.5 3v2.5H3" stroke="#888" stroke-width="0.9" fill="none"/></svg>
<svg style="left:897px;top:154px" width="2" height="69"><rect x="0.6" y="0.5" width="1" height="68" fill="#d4d4d4"/></svg>
<svg style="left:904.8px;top:156.4px;" width="11.5" height="11.5" viewBox="0 0 11.5 11.5"><circle cx="7" cy="4.400" r="3.500" fill="none" stroke="#3b6fb6" stroke-width="1.400"/><path d="M4.600 6.800L0.800 10.600" stroke="#3b6fb6" stroke-width="1.800"/></svg>
<span class="t" style="transform:translate(0.96px,0.70px) rotate(0.03deg) scaleX(0.9674);left:918px;top:154px;font-size:10.6px;line-height:14px;color:#444444;-webkit-text-stroke:0.2px #444;">Найти</span>
<span class="t" style="transform:translate(0.42px,0.20px) rotate(0.03deg) scaleX(1.0898);left:903px;top:172px;font-size:8.4px;line-height:11px;color:#7a6aa0;">ab</span>
<span class="t" style="transform:translate(0.61px,0.40px) rotate(0.03deg) scaleX(1.1100);left:907px;top:179px;font-size:8.4px;line-height:11px;color:#4a7ac0;">ac</span>
<svg style="left:903.6px;top:182.2px;" width="5" height="4" viewBox="0 0 5 4"><path d="M0.400 0.400c0 2 1 2.800 3 2.800M2.200 1.800l1.400 1.400l-1.400 1.200" stroke="#3b6fb6" stroke-width="0.900" fill="none"/></svg>
<span class="t" style="transform:translate(0.48px,0.90px) rotate(0.03deg) scaleX(0.9332);left:919px;top:173px;font-size:10.6px;line-height:14px;color:#444444;-webkit-text-stroke:0.2px #444;">Заменить</span>
<svg style="left:971.65px;top:179.85px;" width="4.5" height="2.7" viewBox="0 0 5 3"><path d="M0 0h5L2.5 3z" fill="#555"/></svg>
<svg style="left:906.8px;top:193px;" width="8.5" height="12.5" viewBox="0 0 8.5 12.5"><path d="M0.600 0.600v9.800l2.400-2.200l1.800 3.800l1.600-0.800l-1.800-3.600h3.200z" fill="#fff" stroke="#666" stroke-width="0.900"/></svg>
<span class="t" style="transform:translate(0.00px,0.00px) rotate(0.03deg) scaleX(0.9186);left:919px;top:193px;font-size:10.6px;line-height:14px;color:#444444;-webkit-text-stroke:0.2px #444;">Выделить</span>
<svg style="left:965.95px;top:199.05px;" width="4.5" height="2.7" viewBox="0 0 5 3"><path d="M0 0h5L2.5 3z" fill="#555"/></svg>
<span class="t" style="transform:translate(0.41px,0.80px) rotate(0.03deg) scaleX(0.9636);left:903px;top:212px;font-size:10px;line-height:13px;color:#666666;">Редактирование</span>
<svg style="left:983px;top:154px" width="2" height="69"><rect x="0.4" y="0.5" width="1" height="68" fill="#d4d4d4"/></svg>
<svg style="left:1117.5px;top:217.4px;" width="7.5" height="5" viewBox="0 0 7.5 5"><path d="M0.600 4.200L3.750 1l3.150 3.200" stroke="#555" stroke-width="1.200" fill="none"/></svg>
<svg style="left:4px;top:227px" width="1129" height="459"><rect x="0" y="0" width="1129" height="458.4" fill="#e6e6e8"/></svg>
<svg style="left:244px;top:228px" width="2" height="456"><rect x="0.2" y="0" width="1" height="456" fill="#c9c9c9"/></svg>
<svg style="left:228px;top:228px" width="13" height="455"><rect x="0.4" y="0.2" width="12.2" height="454.4" fill="#dcdcdc"/></svg>
<svg style="left:228px;top:228px" width="13" height="13"><rect x="0.9" y="0.7" width="11.2" height="11" fill="#ffffff" stroke="#c2c2c2" stroke-width="1"/></svg>
<svg style="left:231.5px;top:232.7px;" width="6" height="3" viewBox="0 0 6 3"><path d="M0 3L3 0l3 3z" fill="#666"/></svg>
<svg style="left:228px;top:670px" width="13" height="13"><rect x="0.9" y="1.1" width="11.2" height="11" fill="#ffffff" stroke="#c2c2c2" stroke-width="1"/></svg>
<svg style="left:231.5px;top:675.1px;" width="6" height="3" viewBox="0 0 6 3"><path d="M0 0h6L3 3z" fill="#666"/></svg>
<svg style="left:228px;top:240px" width="13" height="38"><rect x="0.9" y="0.7" width="11.2" height="36.5" fill="#ffffff" stroke="#c2c2c2" stroke-width="1"/></svg>
<svg style="left:24px;top:240px" width="189" height="144"><rect x="0" y="0" width="189" height="144" fill="#f2684a"/></svg>
<svg style="left:26px;top:242px;" width="185" height="140" viewBox="0 0 185 140"><rect width="185" height="140" fill="#f0dcb8"/><rect width="185" height="140" filter="url(#parchs)" opacity="0.7"/></svg>
<span class="t" style="transform:translate(0.39px,0.40px) rotate(0.03deg) scaleX(0.8581);left:14px;top:239px;font-size:12.4px;line-height:16px;color:#d5573b;">1</span>
<span class="t" style="transform:translate(0.57px,0.60px) rotate(0.03deg) scaleX(1.0638);left:65px;top:255px;font-size:4.6px;line-height:6px;color:#7a1a1a;font-weight:bold;">Павлодарский педагогический университет</span>
<span class="t serif" style="transform:translate(0.37px,0.20px) rotate(0.03deg) scaleX(1.0621);left:61px;top:287px;font-size:10.2px;line-height:13px;color:#97501c;font-weight:bold;font-style:italic;">История Казахстана в</span>
<span class="t serif" style="transform:translate(0.65px,0.60px) rotate(0.03deg) scaleX(1.1019);left:42px;top:299px;font-size:10.2px;line-height:13px;color:#97501c;font-weight:bold;font-style:italic;">законодательных источниках</span>
<span class="t serif" style="transform:translate(0.21px,0.30px) rotate(0.03deg) scaleX(1.0618);left:68px;top:312px;font-size:10.2px;line-height:13px;color:#97501c;font-weight:bold;font-style:italic;">Российской империи</span>
<span class="t serif" style="transform:translate(0.51px,0.00px) rotate(0.03deg) scaleX(1.0483);left:149px;top:333px;font-size:3.9px;line-height:5px;color:#8c6440;font-weight:bold;font-style:italic;">Д.и.н., профессор Отепова Г.Е.</span>
<svg style="left:26px;top:397px" width="186" height="141"><rect x="0.6" y="0.6" width="185" height="139.8" fill="#d0d0d0"/></svg>
<svg style="left:27.4px;top:398.4px;" width="183.4" height="138.2" viewBox="0 0 183.4 138.2"><rect width="183.4" height="138.2" fill="#f0dcb8"/><rect width="183.4" height="138.2" filter="url(#parchs)" opacity="0.7"/></svg>
<span class="t" style="transform:translate(0.46px,0.50px) rotate(0.03deg) scaleX(1.2005);left:13px;top:394px;font-size:12.4px;line-height:16px;color:#6a6a6a;">2</span>
<span class="t" style="transform:translate(0.61px,0.60px) rotate(0.03deg) scaleX(1.0575);left:91px;top:411px;font-size:7.4px;line-height:10px;color:#9a4a2a;font-weight:bold;">Актуальность</span>
<span class="t serif" style="transform:translate(0.54px,0.20px) rotate(0.03deg) scaleX(1.1380);left:50px;top:433px;font-size:4.9px;line-height:6px;color:#8a4a30;font-weight:bold;font-style:italic;">Переосмыслить, понять и познать историю с позиций</span>
<span class="t serif" style="transform:translate(0.92px,0.33px) rotate(0.03deg) scaleX(1.0868);left:44px;top:439px;font-size:4.9px;line-height:6px;color:#8a4a30;font-weight:bold;font-style:italic;">сегодняшнего дня, мыслимо только опираясь на исторические</span>
<span class="t serif" style="transform:translate(0.40px,0.46px) rotate(0.03deg) scaleX(1.1227);left:47px;top:445px;font-size:4.9px;line-height:6px;color:#8a4a30;font-weight:bold;font-style:italic;">источники, т. к. именно они являются связующим звеном</span>
<span class="t serif" style="transform:translate(0.79px,0.59px) rotate(0.03deg) scaleX(1.1240);left:79px;top:451px;font-size:4.9px;line-height:6px;color:#8a4a30;font-weight:bold;font-style:italic;">между прошлым и настоящим.</span>
<svg style="left:75.5px;top:467.4px;overflow:hidden" width="99.2" height="45.2" viewBox="0 0 99.2 45.2"><g filter="url(#b05)"><rect x="-3" y="-3" width="105.2" height="51.2" fill="#0c3846"/>
<rect x="-3" y="-3" width="105.2" height="16" fill="#8c847c"/>
<rect x="-3" y="-3" width="105.2" height="5" fill="#6c6868"/>
<rect x="-3" y="10" width="40" height="4" fill="#a49c90"/>
<rect x="-3" y="30" width="105.2" height="20" fill="#0a2440"/>
<rect x="-3" y="40" width="105.2" height="9" fill="#081432"/>
<path d="M80.800 13.600h17v11.800l-14 0.600z" fill="#c4c4c4"/>
<path d="M29.600 10.700L50.600 8.100L74.900 13.600L74 17L58.100 19.500L32.900 12.800z" fill="#6e5418"/>
<path d="M31 12.500L58.100 19.500L74 17v6.700L58.100 25.800L31 19.200z" fill="#b0942a"/>
<path d="M31 12.500l2.800 1v6.700l-2.800-1zM49 17.200l2.600 0.700v6.800l-2.600-0.700z" fill="#6c2c12"/>
<path d="M31 19.200L58.100 25.800L74 23.700v2.600L58.100 28.400L31 21.600z" fill="#0a2c38"/>
<path d="M10.200 22.800L28.700 6.900" stroke="#e4e4e0" stroke-width="1.300"/>
<path d="M5.200 24.100L27 20.700L56.400 31.200L77.400 29.600L82.500 34.600L80.800 39.600L54.800 43L41.300 41.300L14.400 27.900z" fill="#d8d0cc"/>
<path d="M27 20.700L56.400 31.200l-3 6L20 24z" fill="#c4b4b0"/>
<ellipse cx="45.500" cy="37.100" rx="4" ry="4.200" fill="#8c8454"/>
<ellipse cx="45.500" cy="37.100" rx="2" ry="2.200" fill="#c4bc8c"/>
<ellipse cx="7" cy="26.500" rx="3" ry="2" fill="#5c5c28"/>
<rect x="74.900" y="9.400" width="5.200" height="19.500" fill="#7c1018"/>
<rect x="72.800" y="7.700" width="9.700" height="3" fill="#8c1820"/>
<rect x="73.600" y="26.500" width="8" height="3" fill="#6c0c14"/>
<ellipse cx="77.800" cy="5" rx="2.800" ry="3.200" fill="#ecd864"/></g></svg>
<svg style="left:26px;top:552px" width="186" height="133"><rect x="0.6" y="0.2" width="185" height="132.4" fill="#d0d0d0"/></svg>
<svg style="left:27.4px;top:553px;" width="183.4" height="131.6" viewBox="0 0 183.4 131.6"><rect width="183.4" height="131.6" fill="#f0dcb8"/><rect width="183.4" height="131.6" filter="url(#parchs)" opacity="0.7"/></svg>
<svg style="left:27px;top:553px" width="184" height="132"><rect x="0.4" y="0" width="183.4" height="131.6" fill="rgba(232,190,120,0.16)"/></svg>
<span class="t" style="transform:translate(0.66px,0.00px) rotate(0.03deg) scaleX(1.1538);left:13px;top:550px;font-size:12.4px;line-height:16px;color:#6a6a6a;">3</span>
<span class="t serif" style="transform:translate(0.28px,0.40px) rotate(0.03deg) scaleX(1.1023);left:62px;top:574px;font-size:7.4px;line-height:10px;color:#a5632a;font-weight:bold;font-style:italic;">Законы и внутриполитическая</span>
<span class="t serif" style="transform:translate(0.26px,0.10px) rotate(0.03deg) scaleX(1.1039);left:52px;top:584px;font-size:7.4px;line-height:10px;color:#a5632a;font-weight:bold;font-style:italic;">деятельность общества неразрывно</span>
<span class="t serif" style="transform:translate(0.08px,0.10px) rotate(0.03deg) scaleX(1.1044);left:48px;top:594px;font-size:7.4px;line-height:10px;color:#a5632a;font-weight:bold;font-style:italic;">связаны между собой и потому имеют</span>
<span class="t serif" style="transform:translate(0.47px,0.90px) rotate(0.03deg) scaleX(1.1031);left:55px;top:603px;font-size:7.4px;line-height:10px;color:#a5632a;font-weight:bold;font-style:italic;">огромное значение для воссоздания</span>
<span class="t serif" style="transform:translate(0.27px,0.30px) rotate(0.03deg) scaleX(1.1024);left:77px;top:613px;font-size:7.4px;line-height:10px;color:#a5632a;font-weight:bold;font-style:italic;">объективной истории.</span>
<span class="t serif" style="transform:translate(0.57px,0.70px) rotate(0.03deg) scaleX(1.0985);left:44px;top:624px;font-size:7.4px;line-height:10px;color:#a5632a;font-weight:bold;font-style:italic;">Без изучения и анализа законодательных</span>
<span class="t serif" style="transform:translate(0.30px,0.70px) rotate(0.03deg) scaleX(1.0967);left:47px;top:634px;font-size:7.4px;line-height:10px;color:#a5632a;font-weight:bold;font-style:italic;">источников невозможно восстановить</span>
<span class="t serif" style="transform:translate(0.87px,0.70px) rotate(0.03deg) scaleX(1.1020);left:48px;top:644px;font-size:7.4px;line-height:10px;color:#a5632a;font-weight:bold;font-style:italic;">объективную историю того или иного</span>
<span class="t serif" style="transform:translate(0.63px,0.50px) rotate(0.03deg) scaleX(1.1059);left:95px;top:654px;font-size:7.4px;line-height:10px;color:#a5632a;font-weight:bold;font-style:italic;">государства.</span>
<svg style="left:337px;top:236px" width="465" height="349"><rect x="0.4" y="0.3" width="464" height="348.1" fill="#cccccc"/></svg>
<svg style="left:338.2px;top:237.1px;" width="462.6" height="346.7" viewBox="0 0 462.6 346.7"><rect width="462.6" height="346.7" fill="#f0dcb8"/><rect width="462.6" height="346.7" filter="url(#parch)" opacity="0.95"/></svg>
<span class="t" style="transform:translate(0.78px,0.70px) rotate(0.03deg) scaleX(1.0600);left:434px;top:267px;font-size:11.7px;line-height:15px;color:#8a1414;font-weight:bold;-webkit-text-stroke:0.25px #8a1414;">Павлодарский педагогический университет</span>
<span class="t serif" style="transform:translate(0.78px,0.70px) rotate(0.03deg) scaleX(1.0508);left:425px;top:349px;font-size:26px;line-height:34px;color:#9c480f;font-weight:bold;font-style:italic;-webkit-text-stroke:0.45px #9a4a10;">История Казахстана в</span>
<span class="t serif" style="transform:translate(0.14px,0.10px) rotate(0.03deg) scaleX(1.0914);left:377px;top:380px;font-size:26px;line-height:34px;color:#9c480f;font-weight:bold;font-style:italic;-webkit-text-stroke:0.45px #9a4a10;">законодательных источниках</span>
<span class="t serif" style="transform:translate(0.41px,0.30px) rotate(0.03deg) scaleX(1.0549);left:441px;top:410px;font-size:26px;line-height:34px;color:#9c480f;font-weight:bold;font-style:italic;-webkit-text-stroke:0.45px #9a4a10;">Российской империи</span>
<span class="t serif" style="transform:translate(0.30px,0.90px) rotate(0.03deg) scaleX(1.0696);left:646px;top:458px;font-size:9.9px;line-height:13px;color:#9a5a38;font-weight:bold;font-style:italic;-webkit-text-stroke:0.25px #9a5a38;">Д.и.н., профессор Отепова Г.Е.</span>
<svg style="left:655.5px;top:408.5px;" width="11" height="17" viewBox="0 0 11 17"><path d="M0.700 0.700v13l3-2.800l2 4.700l2-0.900l-2-4.500h4.100z" fill="#fff" stroke="#3a3a3a" stroke-width="0.900"/></svg>
<svg style="left:892px;top:228px" width="13" height="322"><rect x="0.5" y="0.4" width="12.2" height="321.2" fill="#dcdcdc"/></svg>
<svg style="left:892px;top:228px" width="13" height="13"><rect x="1" y="0.9" width="11.2" height="11" fill="#ffffff" stroke="#c2c2c2" stroke-width="1"/></svg>
<svg style="left:895.6px;top:232.9px;" width="6" height="3" viewBox="0 0 6 3"><path d="M0 3L3 0l3 3z" fill="#666"/></svg>
<svg style="left:892px;top:537px" width="13" height="13"><rect x="1" y="1.1" width="11.2" height="11" fill="#ffffff" stroke="#c2c2c2" stroke-width="1"/></svg>
<svg style="left:895.6px;top:542.1px;" width="6" height="3" viewBox="0 0 6 3"><path d="M0 0h6L3 3z" fill="#666"/></svg>
<svg style="left:892px;top:240px" width="13" height="15"><rect x="1" y="0.9" width="11.2" height="13" fill="#ffffff" stroke="#c2c2c2" stroke-width="1"/></svg>
<svg style="left:895.6px;top:554.4px;" width="6" height="7" viewBox="0 0 6 7"><path d="M3 0L6 3.200H0zM3 3L6 6.200H0z" fill="#6a6a6a"/></svg>
<svg style="left:895.6px;top:568.8px;" width="6" height="7" viewBox="0 0 6 7"><path d="M0 0.600h6L3 3.800zM0 3.600h6L3 6.800z" fill="#6a6a6a"/></svg>
<svg style="left:905px;top:228px" width="2" height="456"><rect x="0.6" y="0" width="1.2" height="456" fill="#c6c6c6"/></svg>
<svg style="left:246px;top:596px" width="660" height="1"><rect x="0.4" y="0" width="659.5" height="1" fill="#c4c4c4"/></svg>
<span class="t" style="transform:translate(0.01px,0.20px) rotate(0.03deg) scaleX(1.0449);left:254px;top:603px;font-size:11.4px;line-height:15px;color:#5a5a5a;">Заметки к слайду</span>
<span class="t" style="transform:translate(0.28px,0.10px) rotate(0.03deg) scaleX(1.0333);left:916px;top:239px;font-size:16.8px;line-height:22px;color:#dc6549;">Комментарии</span>
<svg style="left:1100.25px;top:243.65px;" width="6.5" height="3.9" viewBox="0 0 5 3"><path d="M0 0h5L2.5 3z" fill="#555"/></svg>
<svg style="left:1114px;top:241.8px;" width="8" height="8" viewBox="0 0 8 8"><path d="M0.800 0.800l6.400 6.400M7.200 0.800L0.800 7.200" stroke="#444" stroke-width="1.500" fill="none"/></svg>
<svg style="left:932px;top:268px" width="138" height="21"><rect x="0.7" y="0.8" width="136.7" height="19.5" fill="#ffffff" stroke="#ababab" stroke-width="1"/></svg>
<svg style="left:938.5px;top:271.5px;" width="13" height="13" viewBox="0 0 13 13"><path d="M3.600 3h8.200v6.400H6.200l-2.400 2.400V9.400H3.600" fill="#fff" stroke="#8a8a8a" stroke-width="1"/><path d="M2.600 0.400v4.400M0.400 2.600h4.400" stroke="#2f9a7a" stroke-width="1.300"/></svg>
<span class="t" style="transform:translate(0.53px,0.40px) rotate(0.03deg) scaleX(0.9442);left:954px;top:271px;font-size:10.6px;line-height:14px;color:#444444;">Добавить комментарий</span>
<svg style="left:1086px;top:269px" width="19" height="19"><rect x="0.5" y="0" width="18.5" height="18.6" fill="#fbfbfb"/></svg>
<svg style="left:1089.5px;top:272.5px;" width="12" height="12" viewBox="0 0 12 12"><path d="M2.600 2.400h8.200v6.200H5.600l-2.200 2.200V8.600H2.600z" fill="none" stroke="#d4d4d4" stroke-width="1"/><path d="M0.400 3h4M2 1.400L0.400 3L2 4.600" stroke="#c8d0dc" stroke-width="1" fill="none"/></svg>
<svg style="left:1113px;top:269px" width="14" height="19"><rect x="0.8" y="0" width="12.5" height="18.6" fill="#fbfbfb"/></svg>
<svg style="left:1116.5px;top:272.5px;" width="12" height="12" viewBox="0 0 12 12"><path d="M2.600 2.400h7v6.200H5.600l-2.200 2.200V8.600H2.600z" fill="none" stroke="#d4d4d4" stroke-width="1"/><path d="M0.400 3h4M2.800 1.400L4.400 3L2.800 4.600" stroke="#c8d0dc" stroke-width="1" fill="none"/></svg>
<span class="t" style="transform:translate(0.68px,0.40px) rotate(0.03deg) scaleX(0.9581);left:916px;top:304px;font-size:10.4px;line-height:14px;color:#444444;">В этой презентации нет примечаний</span>
<span class="t" style="transform:translate(0.43px,0.70px) rotate(0.03deg) scaleX(0.9610);left:917px;top:330px;font-size:10.4px;line-height:14px;color:#444444;">Добавьте примечание первым</span>
<svg style="left:4px;top:685px" width="1129" height="18"><rect x="0" y="0.2" width="1129" height="17.6" fill="#f2f1f3"/></svg>
<svg style="left:4px;top:684px" width="1129" height="2"><rect x="0" y="0.4" width="1129" height="0.8" fill="#d4d4d4"/></svg>
<span class="t" style="transform:translate(0.84px,0.00px) rotate(0.03deg) scaleX(0.9220);left:10px;top:686px;font-size:9.8px;line-height:13px;color:#666666;">Слайд 1 из 34</span>
<svg style="left:85.5px;top:688px;" width="12.5" height="11" viewBox="0 0 12.5 11"><path d="M0.500 1h4.800v9H0.500zM5.300 1h3" stroke="#666666" stroke-width="0.900" fill="none"/><path d="M7.600 3.600l4 4.400M11.600 3.600l-4 4.400" stroke="#666666" stroke-width="1" fill="none"/></svg>
<span class="t" style="transform:translate(0.50px,0.00px) rotate(0.03deg) scaleX(0.9789);left:111px;top:686px;font-size:9.8px;line-height:13px;color:#666666;">английский (США)</span>
<svg style="left:689.4px;top:689.2px;" width="9" height="10.5" viewBox="0 0 9 10.5"><path d="M4.300 0.400L6.300 2.600H2.300z" fill="#777"/><path d="M1.600 4.200h5.400M0.300 6.300h8M0.300 8.300h8M1.300 10.100h3.600" stroke="#8a8a8a" stroke-width="0.800"/></svg>
<span class="t" style="transform:translate(0.68px,0.80px) rotate(0.03deg) scaleX(1.0140);left:701px;top:686px;font-size:9.8px;line-height:13px;color:#555;">Заметки</span>
<svg style="left:756.4px;top:689px;" width="10.5" height="10.5" viewBox="0 0 10.5 10.5"><path d="M0 0h10V6.800H5.400L3.800 9V6.800H0z" fill="#7a7a7a"/></svg>
<span class="t" style="transform:translate(0.99px,0.80px) rotate(0.03deg) scaleX(1.0255);left:768px;top:686px;font-size:9.8px;line-height:13px;color:#555;">Примечания</span>
<svg style="left:842px;top:685px" width="32" height="18"><rect x="0.4" y="0" width="31" height="18" fill="#c9c9c9"/></svg>
<svg style="left:852px;top:688.2px;" width="12.5" height="11.5" viewBox="0 0 12.5 11.5"><rect x="0.500" y="0.500" width="11.500" height="10.500" fill="none" stroke="#666" stroke-width="1"/><path d="M3.400 0.500v10.500M3.400 6.600h8.600" stroke="#666" stroke-width="1"/><rect x="5" y="2.400" width="5.400" height="2.600" fill="none" stroke="#666" stroke-width="0.800"/></svg>
<svg style="left:882.7px;top:688.2px;" width="13" height="11.5" viewBox="0 0 13 11.5"><g fill="none" stroke="#666" stroke-width="1"><rect x="0.500" y="0.500" width="4.600" height="4"/><rect x="7.700" y="0.500" width="4.600" height="4"/><rect x="0.500" y="6.800" width="4.600" height="4"/><rect x="7.700" y="6.800" width="4.600" height="4"/></g></svg>
<svg style="left:914.3px;top:688.2px;" width="12" height="11.5" viewBox="0 0 12 11.5"><path d="M6 1.400C4.400 0.400 2.400 0.400 0.500 1v9.400c1.900-0.600 3.900-0.600 5.500 0.400c1.600-1 3.600-1 5.500-0.400V1C9.600 0.400 7.600 0.400 6 1.400zM6 1.400v9.400" fill="none" stroke="#666" stroke-width="1"/><path d="M1.800 3.400h2.800M1.800 5.400h2.800M1.800 7.400h2.800M7.400 3.400h2.800M7.400 5.400h2.800M7.400 7.400h2.800" stroke="#888" stroke-width="0.700"/></svg>
<svg style="left:945.5px;top:688.4px;" width="12" height="11.5" viewBox="0 0 12 11.5"><path d="M0 0.600h12M1.400 0.600v6.200h9.200V0.600M6 6.800v3.400M3.600 10.800h4.800" fill="none" stroke="#666" stroke-width="1"/></svg>
<svg style="left:972px;top:693px" width="5" height="2"><rect x="0.2" y="0.4" width="4.6" height="1.2" fill="#555"/></svg>
<svg style="left:980px;top:693px" width="83" height="2"><rect x="0.8" y="0.6" width="81.5" height="0.8" fill="#8a8a8a"/></svg>
<svg style="left:1021px;top:691px" width="2" height="6"><rect x="0.4" y="0.4" width="0.8" height="5" fill="#8a8a8a"/></svg>
<svg style="left:1002px;top:689px" width="4" height="11"><rect x="0.4" y="0" width="3" height="10.2" fill="#555"/></svg>
<svg style="left:1066px;top:693px" width="6" height="2"><rect x="0.2" y="0.4" width="5.8" height="1.2" fill="#555"/></svg>
<svg style="left:1068px;top:691px" width="2" height="6"><rect x="0.5" y="0.1" width="1.2" height="5.8" fill="#555"/></svg>
<span class="t" style="transform:translate(0.54px,0.60px) rotate(0.03deg) scaleX(0.9302);left:1084px;top:686px;font-size:9.8px;line-height:13px;color:#555;">59 %</span>
<svg style="left:1116px;top:688.4px;" width="11.5" height="11.5" viewBox="0 0 11.5 11.5"><rect x="0.500" y="0.500" width="10.500" height="10.500" fill="none" stroke="#666" stroke-width="1"/><path d="M2.400 4.400v-2h2M9.100 4.400v-2h-2M2.400 7.100v2h2M9.100 7.100v2h-2" stroke="#666" stroke-width="0.900" fill="none"/><path d="M2.600 2.600l2 2M8.900 2.600l-2 2M2.600 8.900l2-2M8.900 8.900l-2-2" stroke="#666" stroke-width="0.800"/></svg>
<svg style="left:6px;top:6px" width="18" height="18"><rect x="0" y="0" width="17.5" height="18" rx="4.5" fill="#242424"/></svg>
<svg style="left:9.1px;top:9.1px;" width="11" height="11" viewBox="0 0 11 11"><path d="M5.5 0.3C4 1.3 2.4 1.9 0.6 2v3.3c0 2.6 1.9 4.5 4.9 5.5c3-1 4.9-2.9 4.9-5.5V2C8.6 1.9 7 1.3 5.5 0.3z" fill="#23d959"/><path d="M3.2 5.6l1.6 1.5l3-3.1" stroke="#1e2a22" stroke-width="1.1" fill="none"/></svg>
<div style="left:539px;top:0px;width:221px;height:16.4px;background:#23d959;border-radius:0 0 0 3px;"></div>
<span class="t" style="transform:translate(0.13px,0.30px) rotate(0.03deg) scaleX(0.9396);left:551px;top:2px;font-size:9.2px;line-height:12px;color:#1f4a2c;font-weight:bold;">Вы просматриваете экран Отепова Гульфира</span>
<div style="left:760px;top:0px;width:129px;height:16.4px;background:#232427;border-radius:0 0 3px 0;"></div>
<span class="t" style="transform:translate(0.25px,0.30px) rotate(0.03deg) scaleX(0.8963);left:781px;top:2px;font-size:9.2px;line-height:12px;color:#ffffff;font-weight:bold;">Настройки просмотра</span>
<svg style="left:875.6px;top:6.3px;" width="6" height="4" viewBox="0 0 6 4"><path d="M0.7 0.7L3 3L5.3 0.7" stroke="#e0e0e0" stroke-width="1" fill="none"/></svg>
<svg style="left:1388px;top:6px" width="35" height="19"><rect x="0" y="0" width="35" height="19" rx="5" fill="#232323"/></svg>
<svg style="left:1392px;top:11px;" width="8" height="8" viewBox="0 0 8 8"><rect x="0" y="0" width="2.2" height="2.2" fill="#e8e8e8"/><rect x="0" y="2.9" width="2.2" height="2.2" fill="#e8e8e8"/><rect x="0" y="5.8" width="2.2" height="2.2" fill="#e8e8e8"/><rect x="2.9" y="0" width="2.2" height="2.2" fill="#e8e8e8"/><rect x="2.9" y="2.9" width="2.2" height="2.2" fill="#e8e8e8"/><rect x="2.9" y="5.8" width="2.2" height="2.2" fill="#e8e8e8"/><rect x="5.8" y="0" width="2.2" height="2.2" fill="#e8e8e8"/><rect x="5.8" y="2.9" width="2.2" height="2.2" fill="#e8e8e8"/><rect x="5.8" y="5.8" width="2.2" height="2.2" fill="#e8e8e8"/></svg>
<span class="t" style="transform:translate(0.26px,0.40px) rotate(0.03deg) scaleX(0.9446);left:1403px;top:9px;font-size:9.6px;line-height:12px;color:#e6e6e6;">Вид</span>
<svg style="left:1160px;top:79px" width="128" height="75"><defs><linearGradient id="actg" x1="0" y1="0" x2="0" y2="1"><stop offset="0" stop-color="#dcee78"/><stop offset="0.2" stop-color="#bfe552"/><stop offset="0.45" stop-color="#86d91c"/><stop offset="0.62" stop-color="#7ad01c"/><stop offset="0.85" stop-color="#cdea62"/><stop offset="1" stop-color="#ffff90"/></linearGradient></defs><rect x="1.05" y="1.1" width="125.1" height="72.6" fill="url(#actg)"/><rect x="1.05" y="1.1" width="125.1" height="2.4" fill="#dcee78"/><rect x="1.05" y="70.7" width="125.1" height="3" fill="#ffff90"/></svg>
<svg style="left:1164px;top:82px" width="120" height="68"><rect x="0.1" y="0.75" width="119.1" height="66.9" fill="#222222"/></svg>
<svg style="left:1164.1px;top:82.75px;overflow:hidden" width="119.1" height="66.9" viewBox="0 0 119.1 66.9"><g filter="url(#b1)"><rect x="-3" y="-3" width="125.1" height="72.9" fill="#e6e4e0"/>
<rect x="-3" y="-3" width="32" height="80" fill="#b6a798"/>
<rect x="0" y="-3" width="12" height="80" fill="#c4b5a6"/><rect x="13" y="-3" width="4" height="80" fill="#a09286"/><rect x="18" y="-3" width="4" height="80" fill="#bcae9e"/><rect x="23" y="-3" width="4" height="80" fill="#9c8e84"/>
<rect x="29" y="-3" width="14" height="80" fill="#e9e8e6"/>
<rect x="84" y="-3" width="40" height="80" fill="#e2e6e8"/>
<rect x="56" y="-3" width="26" height="30" fill="#e9e6e2"/>
<rect x="60" y="-2" width="16" height="11.5" fill="#3f4b42"/>
<circle cx="72" cy="3" r="1.3" fill="#c8ccc8"/><circle cx="66" cy="6.5" r="1.6" fill="#68746a"/>
<rect x="72" y="12" width="5" height="7" fill="#b4343e"/>
<rect x="80.5" y="-2" width="2.2" height="32" fill="#8c7a72"/>
<circle cx="102.2" cy="4" r="9" fill="#f2f2f0"/><circle cx="102.2" cy="4" r="6" fill="#9aaab6"/><circle cx="102.2" cy="3" r="3.4" fill="#7c98ac"/>
<circle cx="106.4" cy="23.8" r="11" fill="#5e5138"/><circle cx="106.4" cy="23.8" r="7.6" fill="#7d6a45"/><circle cx="106.4" cy="23.8" r="4.4" fill="#a3803f"/>
<ellipse cx="61.8" cy="33" rx="22" ry="23.5" fill="#683a32"/>
<path d="M40 38c1 12 4 22 9 30h28c4-7 6-17 6-30z" fill="#5c3630"/>
<path d="M46 22c8-10 26-10 32 0c-6-2-12-3-18-3s-10 1-14 3z" fill="#8c5646"/>
<ellipse cx="61" cy="40" rx="15" ry="17.5" fill="#c4917c"/>
<ellipse cx="58" cy="33" rx="9" ry="6" fill="#d6a690"/>
<path d="M45.500 30c4-6 10-8 16-8s12 2 15 8c-5-3-10-4-15-4s-11 1-16 4z" fill="#6f4036"/>
<rect x="43.500" y="32.800" width="15" height="9" rx="3.600" fill="none" stroke="#352e48" stroke-width="1.800"/>
<rect x="61.500" y="32.800" width="15" height="9" rx="3.600" fill="none" stroke="#352e48" stroke-width="1.800"/>
<ellipse cx="59.600" cy="50.800" rx="5.400" ry="1.700" fill="#a01c2c"/>
<path d="M77 34c4 6 6 14 3 24l-7-2c2-7 3-14 4-22z" fill="#2c2424"/>
<path d="M26 70c4-10 14-15 24-16l10 5l12-5c14 1 24 6 30 16z" fill="#5a2832"/>
<path d="M76 52c12 2 21 7 26 16h-30z" fill="#5c2632"/></g></svg>
<svg style="left:1164px;top:135px" width="89" height="15"><rect x="0.1" y="0.15" width="88.9" height="14.5" fill="rgba(40,40,40,0.80)"/></svg>
<span class="t" style="transform:translate(0.06px,0.75px) rotate(0.03deg) scaleX(0.9963);left:1167px;top:136px;font-size:9.5px;line-height:12px;color:#f2f2f2;">Отепова Гульфира</span>
<svg style="left:1288px;top:82px" width="119" height="68"><rect x="0.15" y="0.75" width="118.3" height="66.9" fill="#222222"/></svg>
<span class="t" style="transform:translate(0.34px,0.05px) rotate(0.03deg) scaleX(0.9414);left:1339px;top:108px;font-size:12.1px;line-height:16px;color:#ffffff;font-weight:bold;">KZ</span>
<svg style="left:1288px;top:135px" width="30" height="15"><rect x="0.15" y="0.15" width="29.65" height="14.5" fill="#2c2c2c"/></svg>
<svg style="left:1290px;top:137.2px;" width="11" height="11" viewBox="0 0 11 11"><g fill="#e9504f" stroke="none"><rect x="2.9" y="0.5" width="4.3" height="6.3" rx="2.1"/><path d="M1.8 4.3h0.8c0 1.6 1.1 2.7 2.5 2.7s2.500-1.100 2.500-2.700h0.800c0 1.900-1.200 3.200-2.900 3.500v0.900h1.600v1.200h-4.200v-1.200h1.600v-0.900c-1.700-0.300-2.900-1.600-2.900-3.500z"/></g><path d="M0.500 9.600L9.900 0.400" stroke="#e9504f" stroke-width="1.250" fill="none"/></svg>
<span class="t" style="transform:translate(0.91px,0.75px) rotate(0.03deg) scaleX(0.9531);left:1303px;top:136px;font-size:9.5px;line-height:12px;color:#f2f2f2;">KZ</span>
<svg style="left:1164px;top:154px" width="120" height="68"><rect x="0.1" y="0.21" width="119.1" height="66.9" fill="#222222"/></svg>
<svg style="left:1164.1px;top:154.21px;overflow:hidden" width="119.1" height="66.9" viewBox="0 0 119.1 66.9"><g filter="url(#b1)"><rect x="-3" y="-3" width="125.1" height="72.9" fill="#7a2c1c"/>
<rect x="-3" y="-3" width="125.1" height="18.500" fill="#dededc"/>
<rect x="-3" y="-3" width="125.1" height="4" fill="#c8c8c8"/>
<rect x="-3" y="15" width="125.1" height="5.500" fill="#34140e"/>
<rect x="-3" y="20" width="30" height="50" fill="#5c1610"/>
<rect x="10" y="24" width="8" height="44" fill="#6c1c14"/>
<rect x="84" y="20" width="40" height="50" fill="#8a4436"/>
<rect x="84" y="36" width="24" height="34" fill="#96605c"/>
<rect x="112" y="42" width="10" height="28" fill="#a08060"/>
<circle cx="1.500" cy="19.800" r="1.700" fill="#f4ece4"/><circle cx="36" cy="20.500" r="1.700" fill="#f4ece4"/><circle cx="101" cy="22" r="1.800" fill="#f4ece4"/><circle cx="116.800" cy="22.500" r="1.800" fill="#f4ece4"/>
<rect x="26.500" y="26" width="2.600" height="32" fill="#8c6c34"/>
<rect x="29" y="26.700" width="13" height="27" fill="#2880b0"/>
<path d="M32 47c2-8 5-14 9-17M33 40c2-4 4-7 7-9M36 50c2-5 4-9 6-12" stroke="#62d0cc" stroke-width="1.300" fill="none"/>
<ellipse cx="106" cy="35" rx="5" ry="9" fill="#4c1c16"/>
<ellipse cx="112" cy="32" rx="3.600" ry="6.500" fill="#c8c8c4"/>
<path d="M108.500 40v30" stroke="#d8c8b8" stroke-width="0.900"/>
<ellipse cx="62.500" cy="21" rx="22.500" ry="20.500" fill="#191615"/>
<rect x="42" y="16" width="41.500" height="56" rx="17" fill="#cba89c"/>
<ellipse cx="58" cy="40" rx="10" ry="18" fill="#d9bcb2"/>
<ellipse cx="77" cy="46" rx="5.500" ry="17" fill="#bc968a"/>
<path d="M41 30c1-12 5-19 10-23c7-5 16-5 23 0c5 4 9 11 10 23c-3-8-7-12-12-14c-6-2-13-2-19 0c-5 2-9 6-12 14z" fill="#191615"/>
<path d="M46.500 27.500c4-1.800 8.500-1.800 12.500 0M67 27.500c4-1.800 8.500-1.800 12.500 0" stroke="#241c1a" stroke-width="2.200" fill="none"/>
<ellipse cx="53.500" cy="32" rx="4.600" ry="2" fill="#2c2220"/><ellipse cx="73.500" cy="32" rx="4.600" ry="2" fill="#2c2220"/>
<ellipse cx="63.500" cy="46" rx="4.200" ry="2.200" fill="#a07872"/>
<ellipse cx="63" cy="55" rx="7" ry="1.600" fill="#8c5c58"/>
<ellipse cx="41.500" cy="37" rx="2" ry="5.500" fill="#b48c84"/><ellipse cx="84" cy="37" rx="2" ry="5.500" fill="#a87c74"/>
<path d="M82 72c1-8 6-13 12-14c6 2 10 6 12 14z" fill="#c6dae2"/>
<path d="M26 72c2-8 8-14 16-16v16z" fill="#34343c"/></g></svg>
<svg style="left:1164px;top:206px" width="85" height="16"><rect x="0.1" y="0.61" width="84.6" height="14.5" fill="rgba(40,40,40,0.80)"/></svg>
<svg style="left:1165.95px;top:208.66px;" width="11" height="11" viewBox="0 0 11 11"><g fill="#e9504f" stroke="none"><rect x="2.9" y="0.5" width="4.3" height="6.3" rx="2.1"/><path d="M1.8 4.3h0.8c0 1.6 1.1 2.7 2.5 2.7s2.500-1.100 2.500-2.700h0.800c0 1.900-1.200 3.200-2.900 3.500v0.900h1.600v1.200h-4.200v-1.200h1.600v-0.900c-1.700-0.300-2.900-1.600-2.900-3.500z"/></g><path d="M0.500 9.600L9.900 0.400" stroke="#e9504f" stroke-width="1.250" fill="none"/></svg>
<span class="t" style="transform:translate(0.59px,0.21px) rotate(0.03deg) scaleX(0.9847);left:1180px;top:208px;font-size:9.5px;line-height:12px;color:#f2f2f2;">Auezov science</span>
<svg style="left:1202px;top:220px" width="44" height="5"><rect x="0" y="0.9" width="43.2" height="3.2" fill="#fbf681"/></svg>
<svg style="left:1288px;top:154px" width="119" height="68"><rect x="0.15" y="0.21" width="118.3" height="66.9" fill="#222222"/></svg>
<span class="t" style="transform:translate(0.67px,0.51px) rotate(0.03deg) scaleX(0.9095);left:1298px;top:179px;font-size:12.1px;line-height:16px;color:#ffffff;font-weight:bold;">Пернеева  Газиз...</span>
<svg style="left:1288px;top:206px" width="119" height="16"><rect x="0.15" y="0.61" width="118.3" height="14.5" fill="#2c2c2c"/></svg>
<svg style="left:1290px;top:208.66px;" width="11" height="11" viewBox="0 0 11 11"><g fill="#e9504f" stroke="none"><rect x="2.9" y="0.5" width="4.3" height="6.3" rx="2.1"/><path d="M1.8 4.3h0.8c0 1.6 1.1 2.7 2.5 2.7s2.500-1.100 2.500-2.700h0.800c0 1.900-1.200 3.200-2.900 3.500v0.900h1.600v1.200h-4.200v-1.200h1.600v-0.900c-1.700-0.300-2.900-1.600-2.900-3.500z"/></g><path d="M0.500 9.600L9.900 0.400" stroke="#e9504f" stroke-width="1.250" fill="none"/></svg>
<span class="t" style="transform:translate(0.87px,0.21px) rotate(0.03deg) scaleX(1.0137);left:1303px;top:208px;font-size:9.5px;line-height:12px;color:#f2f2f2;">Пернеева Газиза ОК...</span>
<svg style="left:1164px;top:225px" width="120" height="68"><rect x="0.1" y="0.67" width="119.1" height="66.9" fill="#222222"/></svg>
<svg style="left:1194.1px;top:229.17px;overflow:hidden" width="59.4" height="59.6" viewBox="0 0 59.4 59.6"><g filter="url(#b05)"><rect x="-3" y="-3" width="65.4" height="65.6" fill="#ded2cc"/>
<rect x="-3" y="-3" width="11" height="65.6" fill="#38282a"/>
<rect x="7.700" y="-3" width="1.600" height="65.6" fill="#a88850"/>
<g stroke="#b8915a" stroke-width="2.600" fill="none"><path d="M21.400 -1L9.500 24.500L18.500 42"/><path d="M21.400 -1L31.400 23"/><path d="M52 -1L42 24L50 42"/><path d="M52 -1L61 23"/><path d="M36.500 -1V24"/><path d="M9 24.500h52"/></g>
<path d="M21.400 3l4.600 10h-9z" fill="#d8b052"/><path d="M52.300 3l4.600 10h-9z" fill="#d8b052"/>
<rect x="18" y="13" width="7" height="3.400" fill="#8cb4d4"/><rect x="49" y="13" width="7" height="3.400" fill="#8cb4d4"/>
<rect x="14" y="17" width="15" height="22" fill="#a89070" opacity="0.750"/><rect x="44" y="17" width="16" height="22" fill="#9c845c" opacity="0.750"/>
<rect x="45.900" y="41" width="14" height="6" fill="#a4c0d0"/>
<ellipse cx="33.600" cy="29.600" rx="3.600" ry="4.400" fill="#a8846c"/>
<path d="M30 27.500c0-4 7.200-4 7.200 0c-2-1.200-5.200-1.200-7.200 0z" fill="#2a2420"/>
<path d="M16.800 49.500c0-10 6-15.800 16.800-15.800s13.200 5.800 13.200 15.800z" fill="#12121a"/>
<rect x="-3" y="48.300" width="65.4" height="14" fill="#3c3632"/>
<ellipse cx="22" cy="52" rx="5" ry="3" fill="#5a4e48"/><ellipse cx="36" cy="52.500" rx="5.500" ry="3" fill="#6c5c54"/><ellipse cx="54" cy="51.500" rx="5" ry="3" fill="#2a2a2e"/></g></svg>
<svg style="left:1164px;top:278px" width="120" height="15"><rect x="0.1" y="0.07" width="119.1" height="14.5" fill="rgba(40,40,40,0.80)"/></svg>
<svg style="left:1165.95px;top:280.12px;" width="11" height="11" viewBox="0 0 11 11"><g fill="#e9504f" stroke="none"><rect x="2.9" y="0.5" width="4.3" height="6.3" rx="2.1"/><path d="M1.8 4.3h0.8c0 1.6 1.1 2.7 2.5 2.7s2.500-1.100 2.500-2.700h0.800c0 1.900-1.200 3.200-2.900 3.500v0.900h1.600v1.200h-4.200v-1.200h1.600v-0.900c-1.700-0.300-2.900-1.600-2.900-3.500z"/></g><path d="M0.500 9.600L9.900 0.400" stroke="#e9504f" stroke-width="1.250" fill="none"/></svg>
<span class="t" style="transform:translate(0.83px,0.67px) rotate(0.03deg) scaleX(0.9915);left:1179px;top:279px;font-size:9.5px;line-height:12px;color:#f2f2f2;">Ерболсын Сейдалы ...</span>
<svg style="left:1288px;top:225px" width="119" height="68"><rect x="0.15" y="0.67" width="118.3" height="66.9" fill="#222222"/></svg>
<svg style="left:1317.6px;top:229.17px;overflow:hidden" width="59.4" height="59.6" viewBox="0 0 59.4 59.6"><g filter="url(#b05)"><rect x="-3" y="-3" width="65.4" height="65.6" fill="#f2d4ae"/>
<rect x="-3" y="-3" width="65.4" height="20" fill="#f0d8b8"/>
<path d="M-1 12L39 0v4.500L-1 17.500z" fill="#d6b47c"/>
<path d="M-1 14L39 2" stroke="#e8ccA0" stroke-width="1.200"/>
<ellipse cx="23.500" cy="22" rx="18.800" ry="21.500" fill="#1e2c2c"/>
<path d="M5 24c-2 10-1 17 4 20l10 6l14-5c7-4 10-10 8-22z" fill="#1e2c2c"/>
<path d="M14 22c1-8 7-13 14-11c5 6 6.500 15 4 23c-3 5.500-8 7.500-13 6c-4-4-6-10-5-18z" fill="#e8c0aa"/>
<path d="M15 17c3-6 8-8 13-6c-4 2-9 4-13 6z" fill="#1e2c2c"/>
<path d="M16.500 22.500l5-1.200M25 20l5-1.600" stroke="#4a3c38" stroke-width="1.100"/>
<ellipse cx="25" cy="30.800" rx="4.200" ry="1.100" fill="#c47c7c" transform="rotate(-12 25 30.800)"/>
<path d="M4 62c1-10 6-17 14-18l8 5l12-6c6 1 10 4 12 8v11z" fill="#2c3a4c"/>
<path d="M10 50c4 1 8 4 10 10M36 46c3 2 5 6 6 12" stroke="#4c6c8c" stroke-width="1.400" fill="none"/>
<path d="M22 48l5 14h7l2-14z" fill="#8c3440"/>
<path d="M52.800 10.500c5 14 8 30 7.500 52H40c1-20 5-38 12.800-52z" fill="#22b292"/>
<path d="M52.800 10.500c2 14 2 34 0 52" stroke="#3cc8a8" stroke-width="2" fill="none"/>
<circle cx="51.900" cy="45.300" r="4.400" fill="none" stroke="#d8c890" stroke-width="1.500"/></g></svg>
<svg style="left:1288px;top:278px" width="93" height="15"><rect x="0.15" y="0.07" width="92.85" height="14.5" fill="rgba(40,40,40,0.80)"/></svg>
<svg style="left:1290px;top:280.12px;" width="11" height="11" viewBox="0 0 11 11"><g fill="#e9504f" stroke="none"><rect x="2.9" y="0.5" width="4.3" height="6.3" rx="2.1"/><path d="M1.8 4.3h0.8c0 1.6 1.1 2.7 2.5 2.7s2.500-1.100 2.500-2.700h0.800c0 1.900-1.200 3.200-2.900 3.500v0.900h1.600v1.200h-4.200v-1.200h1.600v-0.900c-1.700-0.300-2.900-1.600-2.900-3.500z"/></g><path d="M0.500 9.600L9.900 0.400" stroke="#e9504f" stroke-width="1.250" fill="none"/></svg>
<span class="t" style="transform:translate(0.84px,0.67px) rotate(0.03deg) scaleX(1.0351);left:1303px;top:279px;font-size:9.5px;line-height:12px;color:#f2f2f2;">Меруерт Тоиева</span>
<svg style="left:1164px;top:297px" width="120" height="68"><rect x="0.1" y="0.13" width="119.1" height="66.9" fill="#222222"/></svg>
<span class="t" style="transform:translate(0.03px,0.43px) rotate(0.03deg) scaleX(0.9132);left:1176px;top:322px;font-size:12.1px;line-height:16px;color:#ffffff;font-weight:bold;">Жансулу  Болат...</span>
<svg style="left:1164px;top:349px" width="120" height="16"><rect x="0.1" y="0.53" width="119.1" height="14.5" fill="#2c2c2c"/></svg>
<svg style="left:1165.95px;top:351.58px;" width="11" height="11" viewBox="0 0 11 11"><g fill="#e9504f" stroke="none"><rect x="2.9" y="0.5" width="4.3" height="6.3" rx="2.1"/><path d="M1.8 4.3h0.8c0 1.6 1.1 2.7 2.5 2.7s2.500-1.100 2.500-2.700h0.800c0 1.900-1.200 3.200-2.900 3.500v0.900h1.600v1.200h-4.200v-1.200h1.600v-0.900c-1.700-0.300-2.900-1.600-2.900-3.500z"/></g><path d="M0.500 9.600L9.900 0.400" stroke="#e9504f" stroke-width="1.250" fill="none"/></svg>
<span class="t" style="transform:translate(0.47px,0.13px) rotate(0.03deg) scaleX(0.9843);left:1180px;top:351px;font-size:9.5px;line-height:12px;color:#f2f2f2;">Жансулу Болатовна ...</span>
<svg style="left:1288px;top:297px" width="119" height="68"><rect x="0.15" y="0.13" width="118.3" height="66.9" fill="#222222"/></svg>
<span class="t" style="transform:translate(0.12px,0.43px) rotate(0.03deg) scaleX(0.9453);left:1299px;top:322px;font-size:12.1px;line-height:16px;color:#ffffff;font-weight:bold;">Абдіқаппар  Ар...</span>
<svg style="left:1288px;top:349px" width="119" height="16"><rect x="0.15" y="0.53" width="118.3" height="14.5" fill="#2c2c2c"/></svg>
<svg style="left:1290px;top:351.58px;" width="11" height="11" viewBox="0 0 11 11"><g fill="#e9504f" stroke="none"><rect x="2.9" y="0.5" width="4.3" height="6.3" rx="2.1"/><path d="M1.8 4.3h0.8c0 1.6 1.1 2.7 2.5 2.7s2.500-1.100 2.500-2.700h0.800c0 1.900-1.200 3.200-2.900 3.500v0.900h1.600v1.200h-4.200v-1.200h1.600v-0.900c-1.700-0.300-2.900-1.600-2.900-3.500z"/></g><path d="M0.500 9.600L9.900 0.400" stroke="#e9504f" stroke-width="1.250" fill="none"/></svg>
<span class="t" style="transform:translate(0.64px,0.13px) rotate(0.03deg) scaleX(1.0207);left:1304px;top:351px;font-size:9.5px;line-height:12px;color:#f2f2f2;">Абдіқаппар Аружан ...</span>
<svg style="left:1164px;top:368px" width="120" height="68"><rect x="0.1" y="0.59" width="119.1" height="66.9" fill="#222222"/></svg>
<svg style="left:1198px;top:367.99px;overflow:hidden" width="50.9" height="67.5" viewBox="0 0 50.9 67.5"><g filter="url(#b05)"><rect x="-3" y="-3" width="56.9" height="73.5" fill="#f6f6f6"/>
<rect x="-3" y="-3" width="56.9" height="13.500" fill="#e8e2dc"/>
<rect x="-3" y="4" width="56.9" height="3" fill="#dcd4cc"/>
<rect x="0" y="15.900" width="39.300" height="30" fill="#d8ecf2"/>
<rect x="0" y="15.900" width="39.300" height="3.600" fill="#a4bcd4"/>
<rect x="2.900" y="20.400" width="7.300" height="6.400" fill="#e89c54"/><rect x="4.800" y="22.200" width="3.400" height="3" fill="#f4d070"/><rect x="12.500" y="20.400" width="6.800" height="6.400" fill="#e0b454"/><rect x="21.500" y="20.400" width="6" height="6.400" fill="#e4c464"/><rect x="30.600" y="20.400" width="6.900" height="6.400" fill="#e8cc6c"/>
<rect x="2" y="27.700" width="13.600" height="14.500" fill="#eaf2f6"/><rect x="17" y="27.700" width="7" height="6" fill="#eaf2f6"/>
<rect x="15.600" y="34" width="28" height="11.900" fill="#62acc4"/>
<rect x="0" y="42.500" width="16" height="3.400" fill="#8cc0d4"/>
<ellipse cx="30.200" cy="33.400" rx="9.200" ry="8.200" fill="#4e3e38"/>
<ellipse cx="30.200" cy="39.800" rx="6.800" ry="8.800" fill="#c09484"/>
<path d="M23.500 33c3-3 10-3 13.500 0c-4-1-9-1-13.500 0z" fill="#54423a"/>
<path d="M24.500 37.500h5M31 37.500h5" stroke="#6c5c58" stroke-width="1"/>
<path d="M23.600 46c2 5 11 5 13.200 0l-0.600 6c-3 2.400-9 2.400-12 0z" fill="#8cb8dc"/>
<path d="M4 70c2-13 10-19 26-19s24 6 26 19z" fill="#565254"/>
<rect x="27.500" y="54" width="5.500" height="14" fill="#6c4c4c"/></g></svg>
<svg style="left:1164px;top:420px" width="108" height="16"><rect x="0.1" y="0.99" width="107.9" height="14.5" fill="rgba(40,40,40,0.80)"/></svg>
<span class="t" style="transform:translate(0.71px,0.59px) rotate(0.03deg) scaleX(1.0231);left:1166px;top:422px;font-size:9.5px;line-height:12px;color:#f2f2f2;">Подключение звука</span>
<svg style="left:1288px;top:368px" width="119" height="68"><rect x="0.15" y="0.59" width="118.3" height="66.9" fill="#222222"/></svg>
<svg style="left:1317.6px;top:372.09px;overflow:hidden" width="59.4" height="59.6" viewBox="0 0 59.4 59.6"><g filter="url(#b05)"><rect x="-3" y="-3" width="65.4" height="65.6" fill="#dedede"/>
<rect x="-3" y="-3" width="24" height="40" fill="#c2c2c2"/>
<ellipse cx="50" cy="52" rx="20" ry="16" fill="#bcbcbc"/>
<ellipse cx="52" cy="12" rx="12" ry="14" fill="#e8e8e8"/>
<path d="M-1 62c0-22 5-46 20-57c9-4 18-1 21 9c-2 14-6 26-14 36l-6 12z" fill="#343434"/>
<path d="M-1 30c2-8 5-14 9-20l4 8l-6 44h-7z" fill="#2c2c2c"/>
<path d="M11 11c7-9 22-11 29-1c-7 0-15 2-22 9z" fill="#5c5c5c"/>
<path d="M19 4.500c8-3.500 17-0.500 20 7.500c-6-3-13-5-20-7.500z" fill="#4a4a4a"/>
<path d="M14 21c6-8 17-11 25-6c1 11-3 21-9 27c-6 3-13 1-17-6c-2-5-1-11 1-15z" fill="#d6d6d6"/>
<path d="M24 18c5-3 10-3 14-1c0 6-2 12-5 17c-3-5-6-10-9-16z" fill="#e4e4e4"/>
<path d="M15 30c3 5 8 8 14 8c-2 3-5 5-8 5c-4-2-6-7-6-13z" fill="#bababa"/>
<ellipse cx="21.500" cy="35.800" rx="3.400" ry="1.500" fill="#343434" transform="rotate(28 21.500 35.800)"/>
<path d="M19.500 24.500l5.500 2.500M29 22l6 1.500" stroke="#484848" stroke-width="1.400"/>
<path d="M-2 62c2-10 6-17 12-21l10 5l12-3c7 3 11 9 12 19z" fill="#242424"/>
<path d="M11.500 43.500l4.500 6l-4 5z" fill="#c4c4c4"/></g></svg>
<svg style="left:1288px;top:420px" width="116" height="16"><rect x="0.15" y="0.99" width="115.65" height="14.5" fill="rgba(40,40,40,0.80)"/></svg>
<svg style="left:1290px;top:423.04px;" width="11" height="11" viewBox="0 0 11 11"><g fill="#e9504f" stroke="none"><rect x="2.9" y="0.5" width="4.3" height="6.3" rx="2.1"/><path d="M1.8 4.3h0.8c0 1.6 1.1 2.7 2.5 2.7s2.500-1.100 2.500-2.700h0.800c0 1.900-1.200 3.200-2.900 3.500v0.900h1.600v1.200h-4.200v-1.200h1.600v-0.900c-1.700-0.300-2.900-1.600-2.900-3.500z"/></g><path d="M0.500 9.600L9.900 0.400" stroke="#e9504f" stroke-width="1.250" fill="none"/></svg>
<span class="t" style="transform:translate(0.64px,0.59px) rotate(0.03deg) scaleX(1.0089);left:1304px;top:422px;font-size:9.5px;line-height:12px;color:#f2f2f2;">Арзиханова Виктория</span>
<svg style="left:1164px;top:440px" width="120" height="67"><rect x="0.1" y="0.05" width="119.1" height="66.9" fill="#222222"/></svg>
<span class="t" style="transform:translate(0.52px,0.35px) rotate(0.03deg) scaleX(0.9690);left:1178px;top:465px;font-size:12.1px;line-height:16px;color:#ffffff;font-weight:bold;">Нурпеисқызы...</span>
<svg style="left:1164px;top:492px" width="120" height="15"><rect x="0.1" y="0.45" width="119.1" height="14.5" fill="#2c2c2c"/></svg>
<svg style="left:1165.95px;top:494.5px;" width="11" height="11" viewBox="0 0 11 11"><g fill="#e9504f" stroke="none"><rect x="2.9" y="0.5" width="4.3" height="6.3" rx="2.1"/><path d="M1.8 4.3h0.8c0 1.6 1.1 2.7 2.5 2.7s2.500-1.100 2.500-2.700h0.800c0 1.900-1.200 3.200-2.900 3.500v0.900h1.600v1.200h-4.200v-1.200h1.600v-0.900c-1.700-0.300-2.900-1.600-2.900-3.500z"/></g><path d="M0.500 9.600L9.900 0.400" stroke="#e9504f" stroke-width="1.250" fill="none"/></svg>
<span class="t" style="transform:translate(0.81px,0.05px) rotate(0.03deg) scaleX(1.0200);left:1179px;top:494px;font-size:9.5px;line-height:12px;color:#f2f2f2;">Нурпеисқызы Аружа...</span>
<svg style="left:1288px;top:440px" width="119" height="67"><rect x="0.15" y="0.05" width="118.3" height="66.9" fill="#222222"/></svg>
<svg style="left:1317px;top:443px" width="60" height="61"><rect x="0.35" y="0.45" width="59.6" height="59.6" fill="#5c6bc0"/></svg>
<span class="t" style="transform:translate(0.76px,0.85px) rotate(0.03deg) scaleX(0.9669);left:1336px;top:452px;font-size:33px;line-height:43px;color:#ffffff;">S</span>
<svg style="left:1288px;top:492px" width="95" height="15"><rect x="0.15" y="0.45" width="94.55" height="14.5" fill="rgba(40,40,40,0.80)"/></svg>
<svg style="left:1290px;top:494.5px;" width="11" height="11" viewBox="0 0 11 11"><g fill="#e9504f" stroke="none"><rect x="2.9" y="0.5" width="4.3" height="6.3" rx="2.1"/><path d="M1.8 4.3h0.8c0 1.6 1.1 2.7 2.5 2.7s2.500-1.100 2.500-2.700h0.800c0 1.900-1.200 3.200-2.900 3.500v0.900h1.600v1.200h-4.200v-1.200h1.600v-0.900c-1.700-0.300-2.900-1.600-2.900-3.500z"/></g><path d="M0.500 9.600L9.900 0.400" stroke="#e9504f" stroke-width="1.250" fill="none"/></svg>
<span class="t" style="transform:translate(0.23px,0.05px) rotate(0.03deg) scaleX(0.9800);left:1304px;top:494px;font-size:9.5px;line-height:12px;color:#f2f2f2;">Saule Tulbassieva</span>
<svg style="left:1164px;top:511px" width="120" height="68"><rect x="0.1" y="0.51" width="119.1" height="66.9" fill="#222222"/></svg>
<span class="t" style="transform:translate(0.68px,0.81px) rotate(0.03deg) scaleX(0.8900);left:1174px;top:536px;font-size:12.1px;line-height:16px;color:#ffffff;font-weight:bold;">Danagul  Gizat  Б...</span>
<svg style="left:1164px;top:563px" width="100" height="16"><rect x="0.1" y="0.91" width="99.1" height="14.5" fill="#2c2c2c"/></svg>
<svg style="left:1165.95px;top:565.96px;" width="11" height="11" viewBox="0 0 11 11"><g fill="#e9504f" stroke="none"><rect x="2.9" y="0.5" width="4.3" height="6.3" rx="2.1"/><path d="M1.8 4.3h0.8c0 1.6 1.1 2.7 2.5 2.7s2.500-1.100 2.500-2.700h0.800c0 1.900-1.200 3.200-2.900 3.500v0.900h1.600v1.200h-4.200v-1.200h1.600v-0.900c-1.700-0.300-2.900-1.600-2.900-3.500z"/></g><path d="M0.500 9.600L9.900 0.400" stroke="#e9504f" stroke-width="1.250" fill="none"/></svg>
<span class="t" style="transform:translate(0.82px,0.51px) rotate(0.03deg) scaleX(1.0022);left:1179px;top:565px;font-size:9.5px;line-height:12px;color:#f2f2f2;">Danagul Gizat БҚУ</span>
<svg style="left:1288px;top:511px" width="119" height="68"><rect x="0.15" y="0.51" width="118.3" height="66.9" fill="#222222"/></svg>
<span class="t" style="transform:translate(0.90px,0.81px) rotate(0.03deg) scaleX(0.9379);left:1332px;top:536px;font-size:12.1px;line-height:16px;color:#ffffff;font-weight:bold;">Дина</span>
<svg style="left:1288px;top:563px" width="41" height="16"><rect x="0.15" y="0.91" width="40.85" height="14.5" fill="#2c2c2c"/></svg>
<svg style="left:1290px;top:565.96px;" width="11" height="11" viewBox="0 0 11 11"><g fill="#e9504f" stroke="none"><rect x="2.9" y="0.5" width="4.3" height="6.3" rx="2.1"/><path d="M1.8 4.3h0.8c0 1.6 1.1 2.7 2.5 2.7s2.500-1.100 2.500-2.700h0.800c0 1.900-1.200 3.200-2.900 3.500v0.900h1.600v1.200h-4.200v-1.200h1.600v-0.900c-1.700-0.300-2.900-1.600-2.900-3.500z"/></g><path d="M0.500 9.600L9.900 0.400" stroke="#e9504f" stroke-width="1.250" fill="none"/></svg>
<span class="t" style="transform:translate(0.59px,0.51px) rotate(0.03deg) scaleX(0.9744);left:1304px;top:565px;font-size:9.5px;line-height:12px;color:#f2f2f2;">Дина</span>
<svg style="left:1164px;top:582px" width="120" height="68"><rect x="0.1" y="0.97" width="119.1" height="66.9" fill="#222222"/></svg>
<span class="t" style="transform:translate(0.04px,0.27px) rotate(0.03deg) scaleX(0.9396);left:1174px;top:608px;font-size:12.1px;line-height:16px;color:#ffffff;font-weight:bold;">Maxsudova  Irod...</span>
<svg style="left:1164px;top:635px" width="120" height="15"><rect x="0.1" y="0.37" width="119.1" height="14.5" fill="#2c2c2c"/></svg>
<svg style="left:1165.95px;top:637.42px;" width="11" height="11" viewBox="0 0 11 11"><g fill="#e9504f" stroke="none"><rect x="2.9" y="0.5" width="4.3" height="6.3" rx="2.1"/><path d="M1.8 4.3h0.8c0 1.6 1.1 2.7 2.5 2.7s2.500-1.100 2.500-2.700h0.800c0 1.900-1.200 3.200-2.900 3.500v0.900h1.600v1.200h-4.200v-1.200h1.600v-0.900c-1.700-0.300-2.900-1.600-2.900-3.500z"/></g><path d="M0.500 9.600L9.900 0.400" stroke="#e9504f" stroke-width="1.250" fill="none"/></svg>
<span class="t" style="transform:translate(0.79px,0.97px) rotate(0.03deg) scaleX(1.0347);left:1179px;top:636px;font-size:9.5px;line-height:12px;color:#f2f2f2;">Maxsudova Iroda ТП...</span>
<svg style="left:1288px;top:582px" width="119" height="68"><rect x="0.15" y="0.97" width="118.3" height="66.9" fill="#222222"/></svg>
<span class="t" style="transform:translate(0.35px,0.27px) rotate(0.03deg) scaleX(0.9033);left:1298px;top:608px;font-size:12.1px;line-height:16px;color:#ffffff;font-weight:bold;">Султанов  Рузак...</span>
<svg style="left:1288px;top:635px" width="97" height="15"><rect x="0.15" y="0.37" width="96.15" height="14.5" fill="#2c2c2c"/></svg>
<svg style="left:1290px;top:637.42px;" width="11" height="11" viewBox="0 0 11 11"><g fill="#e9504f" stroke="none"><rect x="2.9" y="0.5" width="4.3" height="6.3" rx="2.1"/><path d="M1.8 4.3h0.8c0 1.6 1.1 2.7 2.5 2.7s2.500-1.100 2.500-2.700h0.800c0 1.900-1.200 3.200-2.900 3.500v0.900h1.600v1.200h-4.200v-1.200h1.600v-0.900c-1.700-0.300-2.900-1.600-2.900-3.500z"/></g><path d="M0.500 9.600L9.900 0.400" stroke="#e9504f" stroke-width="1.250" fill="none"/></svg>
<span class="t" style="transform:translate(0.18px,0.97px) rotate(0.03deg) scaleX(0.9799);left:1304px;top:636px;font-size:9.5px;line-height:12px;color:#f2f2f2;">Султанов Рузакул</span>
<svg style="left:1164px;top:654px" width="120" height="68"><rect x="0.1" y="0.43" width="119.1" height="66.9" fill="#222222"/></svg>
<span class="t" style="transform:translate(0.66px,0.73px) rotate(0.03deg) scaleX(0.9144);left:1174px;top:679px;font-size:12.1px;line-height:16px;color:#ffffff;font-weight:bold;">Евгений  Шабан...</span>
<svg style="left:1164px;top:706px" width="100" height="16"><rect x="0.1" y="0.83" width="99.7" height="14.5" fill="#2c2c2c"/></svg>
<svg style="left:1165.95px;top:708.88px;" width="11" height="11" viewBox="0 0 11 11"><g fill="#e9504f" stroke="none"><rect x="2.9" y="0.5" width="4.3" height="6.3" rx="2.1"/><path d="M1.8 4.3h0.8c0 1.6 1.1 2.7 2.5 2.7s2.500-1.100 2.500-2.700h0.800c0 1.900-1.200 3.200-2.900 3.500v0.900h1.600v1.200h-4.200v-1.200h1.600v-0.900c-1.700-0.300-2.900-1.600-2.900-3.500z"/></g><path d="M0.500 9.600L9.900 0.400" stroke="#e9504f" stroke-width="1.250" fill="none"/></svg>
<span class="t" style="transform:translate(0.79px,0.43px) rotate(0.03deg) scaleX(1.0361);left:1179px;top:708px;font-size:9.5px;line-height:12px;color:#f2f2f2;">Евгений Шабанов</span>
<svg style="left:1288px;top:654px" width="119" height="68"><rect x="0.15" y="0.43" width="118.3" height="66.9" fill="#222222"/></svg>
<svg style="left:1317.6px;top:657.93px;overflow:hidden" width="59.4" height="59.6" viewBox="0 0 59.4 59.6"><g filter="url(#b05)"><rect x="-3" y="-3" width="65.4" height="65.6" fill="#eff1f5"/>
<rect x="13.200" y="-3" width="36.800" height="65.6" fill="#8c5a3c"/>
<rect x="13.600" y="0.500" width="8" height="9.500" fill="#e4dcc4"/><rect x="22.500" y="0.500" width="6" height="8" fill="#6cb0a0"/>
<rect x="13.600" y="14" width="6" height="12" fill="#88b8a8"/><rect x="42.500" y="6" width="7" height="10" fill="#74b0a0"/><rect x="42.500" y="21" width="6.500" height="8" fill="#94b8a8"/>
<rect x="44" y="14" width="6" height="5" fill="#f0e8dc"/>
<path d="M22.500 0L14 34" stroke="#bc7444" stroke-width="2.400"/>
<rect x="28" y="-1" width="22" height="3.400" fill="#b47444"/>
<rect x="47.500" y="0" width="2.500" height="32" fill="#a4643c"/>
<path d="M30 3c8-3 15 0 15 10l-3 14l-8 8l-6 10l-6 20h-9c0-20 4-44 17-62z" fill="#10151f"/>
<path d="M13.200 40c3-6 6-10 9-12l4 30h-13z" fill="#141a28"/>
<path d="M31 10c3-3.600 10-3.600 12 2c1 6 0 11.500-3 15.500c-3 2-6.500 1-8.500-2c-1.500-5-1.500-10.500-0.500-15.500z" fill="#e6c6b8"/>
<path d="M33 15.500h3.500M38.500 15h3.500" stroke="#4a3a38" stroke-width="1"/>
<ellipse cx="36.800" cy="23" rx="2.600" ry="1" fill="#c47c80"/>
<path d="M22 62c1-16 5-26 10-30l6-6l5 4c5 3 7 10 7 32z" fill="#f0e8e0"/>
<path d="M36 27l5 3l-3 5z" fill="#fbf6f2"/></g></svg>
<svg style="left:1288px;top:706px" width="100" height="16"><rect x="0.15" y="0.83" width="99.05" height="14.5" fill="rgba(40,40,40,0.80)"/></svg>
<span class="t" style="transform:translate(0.76px,0.43px) rotate(0.03deg) scaleX(1.0096);left:1290px;top:708px;font-size:9.5px;line-height:12px;color:#f2f2f2;">Ерланқызы Арайлым</span>
<svg style="left:1259.6px;top:423.49px;" width="7" height="5" viewBox="0 0 7 5"><circle cx="0.9" cy="2.6" r="0.75" fill="#e8e8e8"/><circle cx="3.4" cy="1" r="0.75" fill="#e8e8e8"/><circle cx="5.9" cy="2.6" r="0.75" fill="#e8e8e8"/></svg>
<svg style="left:29px;top:767.5px;" width="19" height="19" viewBox="0 0 19 19"><g fill="#b4b4b4"><rect x="6.2" y="1.2" width="5.6" height="10" rx="2.8"/><path d="M3.4 8.3h1.2c0 2.6 1.9 4.4 4.4 4.4s4.4-1.8 4.4-4.4h1.2c0 3-2.1 5.2-5 5.5v2.3h2.5v1.2h-6.2v-1.2h2.5v-2.3c-2.9-0.3-5-2.5-5-5.5z"/></g><path d="M0.4 18.2L17.8 0.6" stroke="#e5484d" stroke-width="1.2" fill="none"/></svg>
<svg style="left:63.3px;top:775.2px;" width="6.4" height="4" viewBox="0 0 6.4 4"><path d="M0.5 3.5L3.2 0.8L5.9 3.5" stroke="#b4b4b4" stroke-width="1" fill="none"/></svg>
<span class="t" style="transform:translate(0.03px,0.20px) rotate(0.03deg) scaleX(0.9934);left:7px;top:788px;font-size:9.4px;line-height:12px;color:#cfcfcf;">Включить звук</span>
<svg style="left:109.5px;top:767.5px;" width="19" height="19" viewBox="0 0 19 19"><g fill="#b4b4b4"><rect x="0.6" y="4.6" width="12.2" height="10.2" rx="2"/><path d="M13.6 8.2l4.2-2.6c0.4-0.2 0.8 0 0.8 0.4v7.4c0 0.4-0.4 0.6-0.8 0.4l-4.2-2.6z"/></g><path d="M0.6 18.4L18.2 0.6" stroke="#e5484d" stroke-width="1.2" fill="none"/></svg>
<svg style="left:151.1px;top:775.2px;" width="6.4" height="4" viewBox="0 0 6.4 4"><path d="M0.5 3.5L3.2 0.8L5.9 3.5" stroke="#b4b4b4" stroke-width="1" fill="none"/></svg>
<span class="t" style="transform:translate(0.45px,0.20px) rotate(0.03deg) scaleX(0.9782);left:84px;top:788px;font-size:9.4px;line-height:12px;color:#cfcfcf;">Включить видео</span>
<svg style="left:574.5px;top:770.5px;" width="19" height="14" viewBox="0 0 19 14"><g fill="#b4b4b4"><circle cx="6.2" cy="3.4" r="3.1"/><path d="M0.3 13.4c0-3.2 2.4-5.4 5.9-5.4s5.9 2.2 5.9 5.4c0 0.3-0.2 0.5-0.5 0.5h-10.8c-0.3 0-0.5-0.2-0.5-0.5z"/><circle cx="13.9" cy="5" r="2.5"/><path d="M13 13.9c0.2-1.6-0.3-3.2-1.3-4.3c0.7-0.4 1.5-0.6 2.4-0.6c2.6 0 4.4 1.7 4.4 4.3c0 0.3-0.2 0.6-0.5 0.6z"/></g></svg>
<span class="t" style="transform:translate(0.19px,0.80px) rotate(0.03deg) scaleX(0.9973);left:596px;top:769px;font-size:9.2px;line-height:12px;color:#d0d0d0;">43</span>
<svg style="left:620.6px;top:775.2px;" width="6.4" height="4" viewBox="0 0 6.4 4"><path d="M0.5 3.5L3.2 0.8L5.9 3.5" stroke="#b4b4b4" stroke-width="1" fill="none"/></svg>
<span class="t" style="transform:translate(0.76px,0.20px) rotate(0.03deg) scaleX(0.9750);left:562px;top:788px;font-size:9.4px;line-height:12px;color:#cfcfcf;">Участники</span>
<svg style="left:654.8px;top:770px;" width="16" height="14.5" viewBox="0 0 16 14.5"><path d="M3 0.3h9.6c1.6 0 2.7 1.1 2.7 2.7v5.2c0 1.6-1.1 2.7-2.7 2.7h-6.3l-3.1 3.2v-3.2h-0.2c-1.6 0-2.7-1.1-2.7-2.7v-5.2c0-1.6 1.1-2.7 2.7-2.7z" fill="#b4b4b4"/></svg>
<span class="t" style="transform:translate(0.52px,0.20px) rotate(0.03deg) scaleX(0.9271);left:654px;top:788px;font-size:9.4px;line-height:12px;color:#cfcfcf;">Чат</span>
<svg style="left:734px;top:770px" width="19" height="14"><rect x="0.7" y="0.4" width="18" height="13.6" rx="2.5" fill="#23d959"/></svg>
<svg style="left:739.5px;top:772.6px;" width="8" height="9" viewBox="0 0 8 9"><path d="M4 8.2V1.6M1.4 4.2L4 1.5L6.6 4.2" stroke="#10331c" stroke-width="1.3" fill="none"/></svg>
<span class="t" style="transform:translate(0.13px,0.20px) rotate(0.03deg) scaleX(0.8942);left:698px;top:788px;font-size:9.4px;line-height:12px;color:#23d959;font-weight:bold;">Демонстрация экрана</span>
<svg style="left:817.4px;top:769.3px;" width="16" height="16" viewBox="0 0 16 16"><circle cx="8" cy="8" r="7.1" fill="none" stroke="#b4b4b4" stroke-width="0.9"/><circle cx="8" cy="8" r="5.2" fill="#b4b4b4"/></svg>
<span class="t" style="transform:translate(0.20px,0.20px) rotate(0.03deg) scaleX(0.9676);left:810px;top:788px;font-size:9.4px;line-height:12px;color:#cfcfcf;">Запись</span>
<svg style="left:877.5px;top:768px;" width="17" height="17" viewBox="0 0 17 17"><circle cx="7.2" cy="9.6" r="6.7" fill="#b4b4b4"/><circle cx="5.1" cy="8.2" r="0.9" fill="#1a1a1a"/><circle cx="9.3" cy="8.2" r="0.9" fill="#1a1a1a"/><path d="M4.3 10.9c0.8 1.3 1.8 1.9 2.9 1.9s2.1-0.6 2.9-1.9" stroke="#1a1a1a" stroke-width="1" fill="none"/><circle cx="13.5" cy="3.5" r="3.3" fill="#1a1a1a"/><path d="M13.5 0.6l0.7 2.2l2.2 0.7l-2.2 0.7l-0.7 2.2l-0.7-2.2l-2.2-0.7l2.2-0.7z" fill="#b4b4b4"/></svg>
<span class="t" style="transform:translate(0.45px,0.20px) rotate(0.03deg) scaleX(0.9713);left:867px;top:788px;font-size:9.4px;line-height:12px;color:#cfcfcf;">Реакции</span>
<svg style="left:941px;top:771.8px;" width="13" height="13" viewBox="0 0 13 13"><g fill="none" stroke="#b4b4b4" stroke-width="1.1"><path d="M5 0.8H3c-1.3 0-2.2 0.9-2.2 2.2v2.6"/><path d="M8 12.2h2c1.3 0 2.2-0.9 2.2-2.2V7.4"/><circle cx="10.3" cy="2.6" r="1.8"/><circle cx="2.7" cy="10.3" r="1.8"/></g></svg>
<span class="t" style="transform:translate(0.23px,0.20px) rotate(0.03deg) scaleX(1.0140);left:920px;top:788px;font-size:9.4px;line-height:12px;color:#cfcfcf;">Приложения</span>
<svg style="left:1374px;top:774px" width="46" height="21"><rect x="0" y="0.2" width="46" height="20.2" rx="5.5" fill="#b72525"/></svg>
<span class="t" style="transform:translate(0.90px,0.20px) rotate(0.03deg) scaleX(0.9399);left:1381px;top:779px;font-size:9.6px;line-height:12px;color:#ffffff;font-weight:bold;">Выйти</span>
<svg style="left:1258px;top:726px" width="55" height="25"><rect x="0.4" y="0.3" width="54.2" height="24.3" rx="3" fill="#0f0f0f"/></svg>
<svg style="left:1279.5px;top:735px;" width="12" height="8" viewBox="0 0 12 8"><path d="M0.8 0.9L6 6.2L11.2 0.9" stroke="#9494aa" stroke-width="1.1" fill="none"/></svg>
</div>
</body></html>
